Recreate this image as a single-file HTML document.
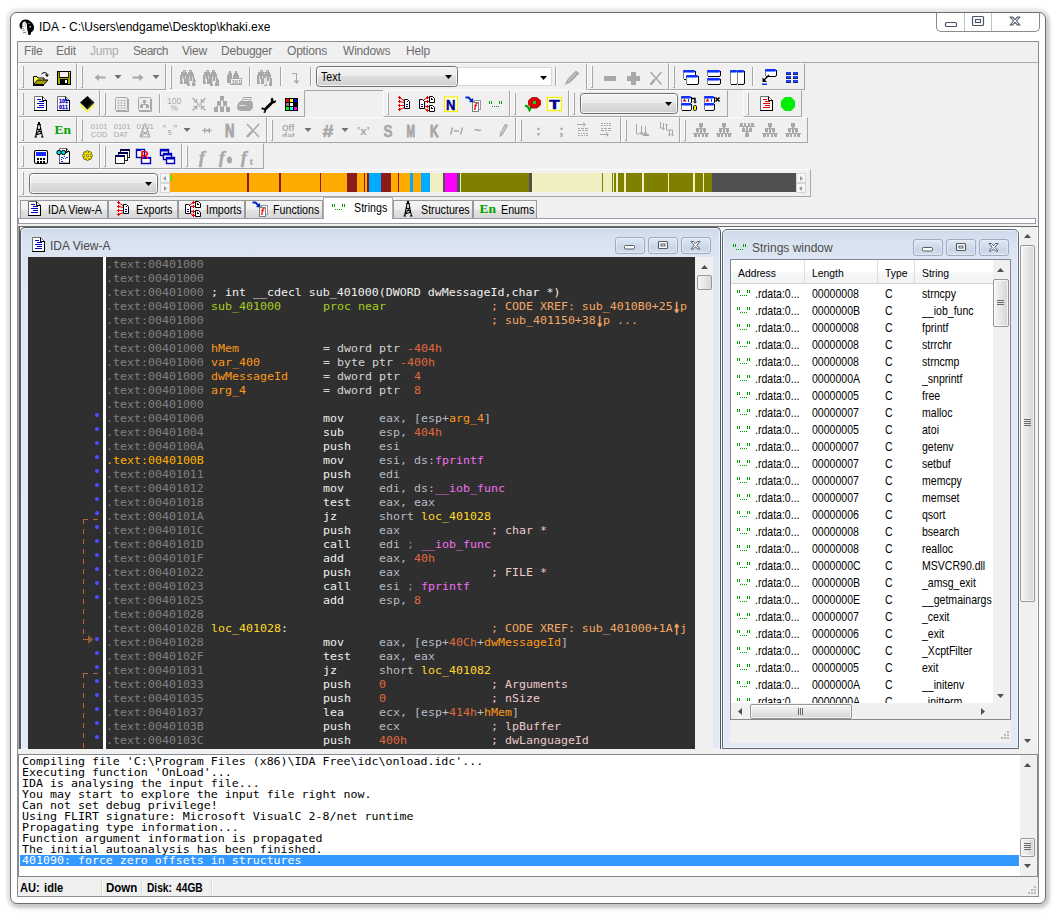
<!DOCTYPE html>
<html><head><meta charset="utf-8"><title>IDA - C:\Users\endgame\Desktop\khaki.exe</title>
<style>
html,body{margin:0;padding:0;background:#fff;}
body{width:1057px;height:915px;position:relative;overflow:hidden;font-family:"Liberation Sans",sans-serif;font-size:12px;color:#000;}
div,svg,span.a{position:absolute;box-sizing:border-box;}
svg{overflow:visible;}
.t{white-space:pre;line-height:14px;}
.m{white-space:pre;font-family:"DejaVu Sans Mono","Liberation Mono",monospace;font-size:11.627px;line-height:14px;transform:scaleY(.93);transform-origin:0 11px;}
.o{white-space:pre;font-family:"DejaVu Sans Mono","Liberation Mono",monospace;font-size:11.627px;line-height:11px;color:#000;transform:scaleY(.83);transform-origin:0 9.500px;}
.s{white-space:pre;font-size:12.400px;line-height:17px;color:#000;transform:scaleX(.85);transform-origin:0 0;}
.b{white-space:pre;font-size:12.500px;line-height:14px;color:#000;transform:scaleX(.855);transform-origin:0 0;}
</style></head>
<body>
<div style="left:10px;top:12px;width:1036px;height:892px;background:#fff;border:1px solid #6e6e6e;border-radius:7px;box-shadow:0 0 0 1px rgba(255,255,255,.6) inset, 0 0 2px 4px rgba(0,0,0,.075), 2px 3px 5px 1px rgba(0,0,0,.16);"></div>
<svg style="left:18px;top:19px;" width="17" height="17" viewBox="0 0 17 17"><path d="M4 1.500Q8 -0.500 12 2Q16.500 5 16 9.500Q15.500 12.500 13 13.500L12.500 16H10.500L9.500 12L3 10Q-0.500 6 4 1.500Z" fill="#000"/><path d="M4.500 4Q5.500 2 7.500 2.500Q9.500 4.500 9 8L9.500 12.500L10 16H4L4.500 12.500Q3.200 9 4.500 4Z" fill="#f2f2f2"/><path d="M6.500 3L8 4.500V8L7 6Z" fill="#b0b0b0"/><path d="M4 7.500h1.500M4.500 9.500h1.500M4.500 11.500h2M5 13.500h3" stroke="#888" stroke-width=".9"/><circle cx="12.200" cy="7.800" r=".8" fill="#fff"/><circle cx="11" cy="4.500" r=".5" fill="#fff"/></svg>
<div class="t" style="left:39px;top:20px;font-size:12px;color:#000;">IDA - C:\Users\endgame\Desktop\khaki.exe</div>
<div style="left:936px;top:13px;width:104px;height:19px;border:1px solid #8b8b8b;border-top:none;border-radius:0 0 5px 5px;background:#fff;"></div>
<div style="left:964px;top:13px;width:1px;height:18px;background:#b9c6c8;"></div>
<div style="left:991px;top:13px;width:1px;height:18px;background:#b9c6c8;"></div>
<svg style="left:945px;top:18px;" width="14" height="10" viewBox="0 0 14 10"><rect x="0.5" y="4.5" width="11" height="4" rx="1" fill="#fff" stroke="#4c5566" stroke-width="1.2"/></svg>
<svg style="left:972px;top:16px;" width="14" height="12" viewBox="0 0 14 12"><rect x="0.5" y="0.5" width="11" height="9" rx="1" fill="#fff" stroke="#4c5566" stroke-width="1.2"/><rect x="3.5" y="3.5" width="5" height="3" fill="#fff" stroke="#4c5566" stroke-width="1.1"/></svg>
<svg style="left:1009px;top:16px;" width="14" height="12" viewBox="0 0 14 12"><path d="M1 1 L3.5 1 L6 3.6 L8.5 1 L11 1 L7.5 5 L11 9 L8.5 9 L6 6.4 L3.5 9 L1 9 L4.5 5 Z" fill="#fff" stroke="#4c5566" stroke-width="1.1" stroke-linejoin="round"/></svg>
<div style="left:17px;top:41px;width:1022px;height:856px;background:#f0f0f0;border:1px solid #8e8e8e;"></div>
<div class="t" style="left:24px;top:44px;font-size:12px;letter-spacing:-0.2px;color:#6e6e6e;">File</div>
<div class="t" style="left:56px;top:44px;font-size:12px;letter-spacing:-0.2px;color:#6e6e6e;">Edit</div>
<div class="t" style="left:90px;top:44px;font-size:12px;letter-spacing:-0.2px;color:#ababab;">Jump</div>
<div class="t" style="left:133px;top:44px;font-size:12px;letter-spacing:-0.5px;color:#6e6e6e;">Search</div>
<div class="t" style="left:182px;top:44px;font-size:12px;letter-spacing:-0.2px;color:#6e6e6e;">View</div>
<div class="t" style="left:221px;top:44px;font-size:12px;letter-spacing:-0.2px;color:#6e6e6e;">Debugger</div>
<div class="t" style="left:287px;top:44px;font-size:12px;letter-spacing:-0.2px;color:#6e6e6e;">Options</div>
<div class="t" style="left:343px;top:44px;font-size:12px;letter-spacing:-0.2px;color:#6e6e6e;">Windows</div>
<div class="t" style="left:406px;top:44px;font-size:12px;letter-spacing:-0.2px;color:#6e6e6e;">Help</div>
<div style="left:18px;top:62px;width:1020px;height:1px;background:#a9a9a9;"></div>
<div style="left:18px;top:63px;width:59px;height:27px;border-right:1px solid #a6a6a6;border-bottom:1px solid #a6a6a6;border-top:1px solid #fbfbfb;border-left:1px solid #fbfbfb;"></div>
<div style="left:22px;top:66px;width:1px;height:21px;background:#fbfbfb;"></div>
<div style="left:23px;top:66px;width:1px;height:21px;background:#a6a6a6;"></div>
<div style="left:22px;top:87px;width:2px;height:1px;background:#a6a6a6;"></div>
<svg style="left:33px;top:70px;" width="16" height="16" viewBox="0 0 16 16"><path d="M8.500 4q2.500-3 5.500-.500v1" fill="none" stroke="#000"/><path d="M12 4.500h4l-2 2.500z" fill="#000"/><path d="M.500 14.500v-8h3.500l1 1.500h6v2" fill="#ffff50" stroke="#000"/><path d="M.500 14.500l4-4.500h10.500l-4 4.500z" fill="#a0a000" stroke="#000"/><g fill="#000" shape-rendering="crispEdges"><rect x="0" y="15" width="11" height="1"/></g></svg>
<svg style="left:56px;top:70px;" width="16" height="16" viewBox="0 0 16 16"><g fill="#000" shape-rendering="crispEdges"><rect x="1" y="1" width="14" height="14"/></g><g fill="#a8a800" shape-rendering="crispEdges"><rect x="2" y="2" width="12" height="12"/></g><g fill="#f4f4f4" shape-rendering="crispEdges"><rect x="4" y="2" width="8" height="5"/></g><g fill="#000" shape-rendering="crispEdges"><rect x="4" y="7" width="8" height="1"/></g><g fill="#000" shape-rendering="crispEdges"><rect x="4" y="9" width="8" height="5"/></g><g fill="#fff" shape-rendering="crispEdges"><rect x="9" y="10" width="2" height="3"/></g><g fill="#fff" shape-rendering="crispEdges"><rect x="13" y="2" width="1" height="1"/></g><g fill="#303000" shape-rendering="crispEdges"><rect x="3" y="2" width="1" height="6"/><rect x="12" y="2" width="1" height="6"/></g></svg>
<div style="left:77px;top:63px;width:89px;height:27px;border-right:1px solid #a6a6a6;border-bottom:1px solid #a6a6a6;border-top:1px solid #fbfbfb;border-left:1px solid #fbfbfb;"></div>
<div style="left:81px;top:66px;width:1px;height:21px;background:#fbfbfb;"></div>
<div style="left:82px;top:66px;width:1px;height:21px;background:#a6a6a6;"></div>
<div style="left:81px;top:87px;width:2px;height:1px;background:#a6a6a6;"></div>
<svg style="left:92px;top:69px;" width="16" height="16" viewBox="0 0 16 16"><path d="M2.500 8.500l4.500-3.500v2.500h6.500v2h-6.500v2.500z" fill="#a8a8a8"/></svg>
<svg style="left:110px;top:69px;" width="16" height="16" viewBox="0 0 16 16"><path d="M4.500 6h7l-3.500 4z" fill="#707070"/></svg>
<svg style="left:130px;top:69px;" width="16" height="16" viewBox="0 0 16 16"><path d="M13.500 8.500l-4.500-3.500v2.500h-6.500v2h6.500v2.500z" fill="#a8a8a8"/></svg>
<svg style="left:148px;top:69px;" width="16" height="16" viewBox="0 0 16 16"><path d="M4.500 6h7l-3.500 4z" fill="#707070"/></svg>
<div style="left:166px;top:63px;width:421px;height:28px;border-right:1px solid #a6a6a6;border-bottom:1px solid #a6a6a6;border-top:1px solid #fbfbfb;border-left:1px solid #fbfbfb;"></div>
<div style="left:170px;top:66px;width:1px;height:22px;background:#fbfbfb;"></div>
<div style="left:171px;top:66px;width:1px;height:22px;background:#a6a6a6;"></div>
<div style="left:170px;top:88px;width:2px;height:1px;background:#a6a6a6;"></div>
<svg style="left:180px;top:70px;" width="16" height="16" viewBox="0 0 16 16"><path d="M3 0h3v2h1v2h1v3h-1v7h-3v-5h-1v5h-3v-9h1v-3h2z" fill="#a8a8a8"/><path d="M9 0h3v2h1v2h1v4h1v8h-3v-5h-2v5h-3v-9h1v-5h1z" fill="#a8a8a8"/><path d="M4.500 1v1M10.500 1v1M2.500 6v6M9.500 6v8M5.500 6v3M12.500 7v6" stroke="#d8d8d8" stroke-width="1"/><g fill="#a8a8a8" shape-rendering="crispEdges"><rect x="14" y="8" width="1" height="1"/><rect x="15" y="10" width="1" height="1"/><rect x="14" y="12" width="1" height="1"/><rect x="15" y="14" width="1" height="1"/></g></svg>
<svg style="left:203px;top:70px;" width="16" height="16" viewBox="0 0 16 16"><path d="M3 0h3v2h1v2h1v3h-1v7h-3v-5h-1v5h-3v-9h1v-3h2z" fill="#a8a8a8"/><path d="M9 0h3v2h1v2h1v4h1v8h-3v-5h-2v5h-3v-9h1v-5h1z" fill="#a8a8a8"/><path d="M4.500 1v1M10.500 1v1M2.500 6v6M9.500 6v8M5.500 6v3M12.500 7v6" stroke="#d8d8d8" stroke-width="1"/><path d="M13 7l3 3v6h-2z" fill="#a8a8a8"/></svg>
<svg style="left:226px;top:70px;" width="16" height="16" viewBox="0 0 16 16"><g fill="#a8a8a8" shape-rendering="crispEdges"><rect x="3" y="1" width="2" height="2"/><rect x="2" y="3" width="4" height="2"/><rect x="1" y="5" width="5" height="8"/><rect x="9" y="1" width="2" height="2"/><rect x="8" y="3" width="4" height="2"/><rect x="7" y="5" width="6" height="3"/></g><rect x="4.500" y="8.500" width="11" height="6" fill="#f4f4f4" stroke="#a8a8a8" shape-rendering="crispEdges"/><text x="5.8" y="13.6" font-size="5.5" fill="#909090" font-weight="bold" font-family="Liberation Sans,sans-serif" >101</text></svg>
<div style="left:249px;top:67px;width:1px;height:19px;background:#a6a6a6;"></div>
<div style="left:250px;top:67px;width:1px;height:19px;background:#fbfbfb;"></div>
<svg style="left:257px;top:70px;" width="16" height="16" viewBox="0 0 16 16"><path d="M3 0h3v2h1v2h1v3h-1v7h-3v-5h-1v5h-3v-9h1v-3h2z" fill="#a8a8a8"/><path d="M9 0h3v2h1v2h1v4h1v8h-3v-5h-2v5h-3v-9h1v-5h1z" fill="#a8a8a8"/><path d="M4.500 1v1M10.500 1v1M2.500 6v6M9.500 6v8M5.500 6v3M12.500 7v6" stroke="#d8d8d8" stroke-width="1"/><g fill="#a8a8a8" shape-rendering="crispEdges"><rect x="6" y="2" width="3" height="1"/></g><g fill="#e8e8e8" shape-rendering="crispEdges"><rect x="7" y="8" width="2" height="7"/></g></svg>
<div style="left:280px;top:67px;width:1px;height:19px;background:#a6a6a6;"></div>
<div style="left:281px;top:67px;width:1px;height:19px;background:#fbfbfb;"></div>
<svg style="left:288px;top:70px;" width="16" height="16" viewBox="0 0 16 16"><g fill="#a8a8a8" shape-rendering="crispEdges"><rect x="4" y="3" width="5" height="1"/><rect x="8" y="4" width="1" height="8"/></g><path d="M5.500 10.500h6l-3 3.500z" fill="#a8a8a8"/></svg>
<div style="left:310px;top:67px;width:1px;height:19px;background:#a6a6a6;"></div>
<div style="left:311px;top:67px;width:1px;height:19px;background:#fbfbfb;"></div>
<div style="left:316px;top:66px;width:142px;height:21px;border:1px solid #707070;border-radius:3.500px;background:linear-gradient(#f3f3f3 0%,#ececec 47%,#dedede 50%,#d0d0d0 100%);box-shadow:inset 0 0 0 1px rgba(255,255,255,.75);"></div>
<svg style="left:445px;top:75px;" width="8" height="4" viewBox="0 0 8 4"><path d="M0 0h7l-3.500 4z" fill="#000"/></svg>
<div class="b" style="left:321px;top:70px;">Text</div>
<div style="left:458px;top:67px;width:94px;height:19px;background:#fff;border:1px solid #d4d8e0;border-left:none;"></div>
<svg style="left:540px;top:76px;" width="8" height="4" viewBox="0 0 8 4"><path d="M0 0h7l-3.500 4z" fill="#000"/></svg>
<div style="left:555px;top:67px;width:1px;height:19px;background:#a6a6a6;"></div>
<div style="left:556px;top:67px;width:1px;height:19px;background:#fbfbfb;"></div>
<svg style="left:564px;top:70px;" width="16" height="16" viewBox="0 0 16 16"><path d="M.500 15l3-6 8.500-8.500 3.500 3-9 9z" fill="#a8a8a8"/><path d="M5 10l7-7M7 12l7-7M3.500 9.500l3.500 3" stroke="#dcdcdc" stroke-width=".8"/></svg>
<div style="left:587px;top:63px;width:82px;height:27px;border-right:1px solid #a6a6a6;border-bottom:1px solid #a6a6a6;border-top:1px solid #fbfbfb;border-left:1px solid #fbfbfb;"></div>
<div style="left:591px;top:66px;width:1px;height:21px;background:#fbfbfb;"></div>
<div style="left:592px;top:66px;width:1px;height:21px;background:#a6a6a6;"></div>
<div style="left:591px;top:87px;width:2px;height:1px;background:#a6a6a6;"></div>
<svg style="left:602px;top:70px;" width="16" height="16" viewBox="0 0 16 16"><g fill="#a8a8a8" shape-rendering="crispEdges"><rect x="2" y="6" width="12" height="5"/></g></svg>
<svg style="left:625px;top:70px;" width="16" height="16" viewBox="0 0 16 16"><g fill="#a8a8a8" shape-rendering="crispEdges"><rect x="6" y="2" width="5" height="13"/><rect x="2" y="6" width="13" height="5"/></g></svg>
<svg style="left:648px;top:70px;" width="16" height="16" viewBox="0 0 16 16"><path d="M2.500 2l11 12.500M13.500 2l-11 12.500" stroke="#a8a8a8" stroke-width="1.500"/><path d="M2.500 14.500l4-4.500" stroke="#a8a8a8" stroke-width="2.500"/></svg>
<div style="left:669px;top:63px;width:136px;height:27px;border-right:1px solid #a6a6a6;border-bottom:1px solid #a6a6a6;border-top:1px solid #fbfbfb;border-left:1px solid #fbfbfb;"></div>
<div style="left:673px;top:66px;width:1px;height:21px;background:#fbfbfb;"></div>
<div style="left:674px;top:66px;width:1px;height:21px;background:#a6a6a6;"></div>
<div style="left:673px;top:87px;width:2px;height:1px;background:#a6a6a6;"></div>
<svg style="left:683px;top:70px;" width="16" height="16" viewBox="0 0 16 16"><rect x="0" y="0" width="12" height="10" rx="1.500" fill="#fff"/><path d="M0.5 9v-7" stroke="#808080" fill="none"/><path d="M1 9.5h10q1.500 0 1.500-1.500v-7" stroke="#000" fill="none"/><rect x="0" y="0" width="12" height="2.500" rx="1" fill="#1030ff"/><rect x="1" y="2" width="10" height="1" fill="#7090ff"/><rect x="3" y="5" width="12" height="10" rx="1.500" fill="#fff"/><path d="M3.5 14v-7" stroke="#808080" fill="none"/><path d="M4 14.5h10q1.500 0 1.500-1.500v-7" stroke="#000" fill="none"/><rect x="3" y="5" width="12" height="2.500" rx="1" fill="#1030ff"/><rect x="4" y="7" width="10" height="1" fill="#7090ff"/></svg>
<svg style="left:706px;top:70px;" width="16" height="16" viewBox="0 0 16 16"><rect x="1" y="0" width="13" height="7" rx="1.500" fill="#fff"/><path d="M1.5 6v-4" stroke="#808080" fill="none"/><path d="M2 6.5h11q1.500 0 1.500-1.500v-4" stroke="#000" fill="none"/><rect x="1" y="0" width="13" height="2.500" rx="1" fill="#1030ff"/><rect x="2" y="2" width="11" height="1" fill="#7090ff"/><rect x="1" y="8" width="13" height="7" rx="1.500" fill="#fff"/><path d="M1.5 14v-4" stroke="#808080" fill="none"/><path d="M2 14.5h11q1.500 0 1.500-1.500v-4" stroke="#000" fill="none"/><rect x="1" y="8" width="13" height="2.500" rx="1" fill="#1030ff"/><rect x="2" y="10" width="11" height="1" fill="#7090ff"/></svg>
<svg style="left:729px;top:70px;" width="16" height="16" viewBox="0 0 16 16"><rect x="1" y="0" width="7" height="15" rx="1.500" fill="#fff"/><path d="M1.5 14v-12" stroke="#808080" fill="none"/><path d="M2 14.5h5q1.500 0 1.500-1.500v-12" stroke="#000" fill="none"/><rect x="1" y="0" width="7" height="2.500" rx="1" fill="#1030ff"/><rect x="2" y="2" width="5" height="1" fill="#7090ff"/><rect x="8" y="0" width="7" height="15" rx="1.500" fill="#fff"/><path d="M8.5 14v-12" stroke="#808080" fill="none"/><path d="M9 14.5h5q1.500 0 1.500-1.500v-12" stroke="#000" fill="none"/><rect x="8" y="0" width="7" height="2.500" rx="1" fill="#1030ff"/><rect x="9" y="2" width="5" height="1" fill="#7090ff"/></svg>
<div style="left:752px;top:67px;width:1px;height:19px;background:#a6a6a6;"></div>
<div style="left:753px;top:67px;width:1px;height:19px;background:#fbfbfb;"></div>
<svg style="left:760px;top:70px;" width="16" height="16" viewBox="0 0 16 16"><rect x="5" y="-1" width="11" height="8" rx="1.500" fill="#fff"/><path d="M5.5 6v-5" stroke="#808080" fill="none"/><path d="M6 6.5h9q1.500 0 1.500-1.500v-5" stroke="#000" fill="none"/><rect x="5" y="-1" width="11" height="2.500" rx="1" fill="#1030ff"/><rect x="6" y="1" width="9" height="1" fill="#7090ff"/><path d="M9 5l-5 5" stroke="#000" stroke-width="1.300"/><path d="M2.500 12v-4.500l4.500 4.500z" fill="#000"/><g fill="#1030ff" shape-rendering="crispEdges"><rect x="2" y="13" width="5" height="2"/></g><g fill="#7090ff" shape-rendering="crispEdges"><rect x="2" y="13" width="5" height="1"/></g></svg>
<svg style="left:784px;top:70px;" width="16" height="16" viewBox="0 0 16 16"><g fill="#2040e8" shape-rendering="crispEdges"><rect x="2" y="2" width="5" height="2"/><rect x="9" y="2" width="5" height="2"/><rect x="2" y="6" width="5" height="2"/><rect x="9" y="6" width="5" height="2"/><rect x="2" y="10" width="5" height="2"/><rect x="9" y="10" width="5" height="2"/></g><g fill="#182060" shape-rendering="crispEdges"><rect x="2" y="4" width="5" height="1"/><rect x="9" y="4" width="5" height="1"/><rect x="2" y="8" width="5" height="1"/><rect x="9" y="8" width="5" height="1"/><rect x="2" y="12" width="5" height="1"/><rect x="9" y="12" width="5" height="1"/></g></svg>
<div style="left:18px;top:90px;width:82px;height:27px;border-right:1px solid #a6a6a6;border-bottom:1px solid #a6a6a6;border-top:1px solid #fbfbfb;border-left:1px solid #fbfbfb;"></div>
<div style="left:22px;top:93px;width:1px;height:21px;background:#fbfbfb;"></div>
<div style="left:23px;top:93px;width:1px;height:21px;background:#a6a6a6;"></div>
<div style="left:22px;top:114px;width:2px;height:1px;background:#a6a6a6;"></div>
<svg style="left:33px;top:96px;" width="16" height="16" viewBox="0 0 16 16"><path d="M1.500 .500h8l4 4v10h-12z" fill="#fff" stroke="#707070"/><path d="M9.500 .500v4h4" fill="none" stroke="#000"/><g fill="#000" shape-rendering="crispEdges"><rect x="1" y="14" width="13" height="1"/><rect x="13" y="4" width="1" height="11"/></g><g fill="#0000c8" shape-rendering="crispEdges"><rect x="4" y="3" width="4" height="1"/><rect x="6" y="5" width="5" height="1"/><rect x="4" y="7" width="7" height="1"/><rect x="6" y="9" width="5" height="1"/><rect x="4" y="11" width="7" height="1"/></g></svg>
<svg style="left:56px;top:96px;" width="16" height="16" viewBox="0 0 16 16"><path d="M1.500 .500h8l4 4v10h-12z" fill="#fff" stroke="#707070"/><path d="M9.500 .500v4h4" fill="none" stroke="#000"/><g fill="#000" shape-rendering="crispEdges"><rect x="1" y="14" width="13" height="1"/><rect x="13" y="4" width="1" height="11"/></g><text x="2.9" y="7.2" font-size="5.6" fill="#0000c8" font-weight="bold" font-family="DejaVu Sans,sans-serif" textLength="9" lengthAdjust="spacingAndGlyphs" stroke="#0000c8" stroke-width=".25">101</text><text x="2.9" y="12.6" font-size="5.6" fill="#0000c8" font-weight="bold" font-family="DejaVu Sans,sans-serif" textLength="9" lengthAdjust="spacingAndGlyphs" stroke="#0000c8" stroke-width=".25">011</text></svg>
<svg style="left:79px;top:96px;" width="16" height="16" viewBox="0 0 16 16"><path d="M2.500 8v3M4.500 10v3M6.500 12v3M8.500 13.500v2.500M10.500 12v3M12.500 10v3M14.500 8v3" stroke="#f8f000" stroke-width="1.200"/><path d="M8.500 0l7 6.500-7 7-7.500-7z" fill="#000"/><path d="M9.500 2l4.500 4.500-5.500 5.500" fill="none" stroke="#805838" stroke-width=".8"/></svg>
<div style="left:100px;top:90px;width:205px;height:27px;border-right:1px solid #a6a6a6;border-bottom:1px solid #a6a6a6;border-top:1px solid #fbfbfb;border-left:1px solid #fbfbfb;"></div>
<div style="left:104px;top:93px;width:1px;height:21px;background:#fbfbfb;"></div>
<div style="left:105px;top:93px;width:1px;height:21px;background:#a6a6a6;"></div>
<div style="left:104px;top:114px;width:2px;height:1px;background:#a6a6a6;"></div>
<svg style="left:114px;top:96px;" width="16" height="16" viewBox="0 0 16 16"><rect x="1.500" y="1.500" width="12" height="13" rx="1" fill="#ececec" stroke="#a8a8a8"/><g fill="#a8a8a8" shape-rendering="crispEdges"><rect x="2" y="15" width="13" height="1"/><rect x="14" y="3" width="1" height="12"/></g><path d="M3.500 4.500h8M3.500 7h8M3.500 9.500h8M3.500 12h8" stroke="#a8a8a8" stroke-dasharray="2 1"/></svg>
<svg style="left:137px;top:96px;" width="16" height="16" viewBox="0 0 16 16"><rect x="1.500" y="1.500" width="12" height="13" rx="1" fill="#ececec" stroke="#a8a8a8"/><g fill="#a8a8a8" shape-rendering="crispEdges"><rect x="2" y="15" width="13" height="1"/><rect x="14" y="3" width="1" height="12"/></g><g fill="#a8a8a8" shape-rendering="crispEdges"><rect x="6" y="4" width="3" height="3"/><rect x="7" y="7" width="1" height="2"/><rect x="4" y="8" width="7" height="1"/><rect x="3" y="9" width="3" height="3"/><rect x="9" y="9" width="3" height="3"/></g></svg>
<div style="left:159px;top:94px;width:1px;height:19px;background:#a6a6a6;"></div>
<div style="left:160px;top:94px;width:1px;height:19px;background:#fbfbfb;"></div>
<svg style="left:167px;top:96px;" width="16" height="16" viewBox="0 0 16 16"><text x="0" y="7.5" font-size="8.5" fill="#a8a8a8" font-weight="normal" font-family="Liberation Sans,sans-serif" >100</text><text x="3.5" y="15" font-size="8.5" fill="#a8a8a8" font-weight="normal" font-family="Liberation Sans,sans-serif" >%</text></svg>
<svg style="left:191px;top:96px;" width="16" height="16" viewBox="0 0 16 16"><path d="M1.500 2l4 4M14.500 2l-4 4M1.500 14.500l4-4M14.500 14.500l-4-4" stroke="#a8a8a8" stroke-width="1.200"/><path d="M5.500 3v3h-3M10.500 3v3h3M5.500 13.500v-3h-3M10.500 13.500v-3h3" fill="none" stroke="#a8a8a8" stroke-width="1.200"/><text x="5.3" y="11" font-size="7" fill="#a8a8a8" font-weight="normal" font-family="Liberation Sans,sans-serif" >M</text></svg>
<svg style="left:214px;top:96px;" width="16" height="16" viewBox="0 0 16 16"><g fill="#a8a8a8" shape-rendering="crispEdges"><rect x="6" y="0" width="4" height="4"/><rect x="3" y="5" width="4" height="4"/><rect x="9" y="5" width="4" height="4"/><rect x="0" y="11" width="4" height="5"/><rect x="6" y="11" width="4" height="5"/><rect x="12" y="11" width="4" height="5"/></g><path d="M8 3l-6 9M8 3l6 9M5 9l3 3M11 9l-3 3" stroke="#a8a8a8" stroke-width="1.200"/></svg>
<svg style="left:237px;top:96px;" width="16" height="16" viewBox="0 0 16 16"><path d="M4.500 5.500l2-4h8l-2 4z" fill="#ececec" stroke="#a8a8a8"/><path d="M.500 8l3-3h11.500l1 3v4l-3 3h-10l-3-2z" fill="#a8a8a8"/><path d="M7 3.500h5" stroke="#a8a8a8"/><path d="M2 9.500h7" stroke="#e8e8e8"/></svg>
<svg style="left:260px;top:96px;" width="16" height="16" viewBox="0 0 16 16"><path d="M1 13l1.500-2 1.500 1.500 7-7q-1-2.500 1-4l1.500 1.500-.5 1.500 2 .5 1-1q.5 3-3 3.500l-7 7q.5 2-1.500 2.500l-1.500-1 1.500-.5-.5-1.500z" fill="#000"/></svg>
<svg style="left:283px;top:96px;" width="16" height="16" viewBox="0 0 16 16"><g fill="#000" shape-rendering="crispEdges"><rect x="2" y="2" width="13" height="13"/></g><g fill="#f00" shape-rendering="crispEdges"><rect x="3" y="3" width="3" height="3"/></g><g fill="#ff0" shape-rendering="crispEdges"><rect x="7" y="3" width="3" height="3"/></g><g fill="#00f" shape-rendering="crispEdges"><rect x="11" y="3" width="3" height="3"/></g><g fill="#808080" shape-rendering="crispEdges"><rect x="3" y="7" width="3" height="3"/></g><g fill="#fff" shape-rendering="crispEdges"><rect x="7" y="7" width="3" height="3"/></g><g fill="#0f0" shape-rendering="crispEdges"><rect x="3" y="11" width="3" height="3"/></g><g fill="#0ff" shape-rendering="crispEdges"><rect x="7" y="11" width="3" height="3"/></g><g fill="#f0f" shape-rendering="crispEdges"><rect x="11" y="11" width="3" height="3"/></g></svg>
<div style="left:383px;top:90px;width:127px;height:27px;border-right:1px solid #a6a6a6;border-bottom:1px solid #a6a6a6;border-top:1px solid #fbfbfb;border-left:1px solid #fbfbfb;"></div>
<div style="left:387px;top:93px;width:1px;height:21px;background:#fbfbfb;"></div>
<div style="left:388px;top:93px;width:1px;height:21px;background:#a6a6a6;"></div>
<div style="left:387px;top:114px;width:2px;height:1px;background:#a6a6a6;"></div>
<svg style="left:396px;top:96px;" width="16" height="16" viewBox="0 0 16 16"><path d="M3.500 1.500l5 3.500M3.500 5.500l5 1M3.500 9.500h5M3.500 13.500l5-2" stroke="#f00000" stroke-width="1"/><g fill="#f00000" shape-rendering="crispEdges"><rect x="2" y="1" width="3" height="1"/><rect x="3" y="0" width="1" height="3"/><rect x="2" y="5" width="3" height="1"/><rect x="3" y="4" width="1" height="3"/><rect x="2" y="9" width="3" height="1"/><rect x="3" y="8" width="1" height="3"/><rect x="2" y="13" width="3" height="1"/><rect x="3" y="12" width="1" height="3"/></g><path d="M8.500 3.500h3l2 2v7h-5z" fill="#fff" stroke="#000"/><g fill="#0000a8" shape-rendering="crispEdges"><rect x="10" y="8" width="2" height="1"/><rect x="10" y="10" width="2" height="1"/></g><g fill="#000" shape-rendering="crispEdges"><rect x="11" y="5" width="1" height="1"/></g></svg>
<svg style="left:419px;top:96px;" width="16" height="16" viewBox="0 0 16 16"><path d="M8.500 1.500l-4 2.500M8.500 5.500h-3M8.500 10.500h-3M8.500 14.500l-3-2" stroke="#f00000" stroke-width="1"/><g fill="#f00000" shape-rendering="crispEdges"><rect x="7" y="1" width="3" height="1"/><rect x="8" y="0" width="1" height="3"/><rect x="7" y="5" width="3" height="1"/><rect x="8" y="4" width="1" height="3"/><rect x="7" y="10" width="3" height="1"/><rect x="8" y="9" width="1" height="3"/><rect x="7" y="14" width="3" height="1"/><rect x="8" y="13" width="1" height="3"/></g><path d="M.500 3.500h3l2 2v7h-5z" fill="#fff" stroke="#000"/><g fill="#0000a8" shape-rendering="crispEdges"><rect x="2" y="8" width="2" height="1"/><rect x="2" y="10" width="2" height="1"/></g><path d="M10.500 .500h3l2 2v4h-5zM10.500 9.500h3l2 2v4h-5z" fill="#fff" stroke="#000"/><g fill="#000" shape-rendering="crispEdges"><rect x="12" y="2" width="1" height="2"/><rect x="12" y="3" width="2" height="1"/><rect x="12" y="11" width="1" height="2"/><rect x="12" y="12" width="2" height="1"/></g></svg>
<svg style="left:442px;top:96px;" width="16" height="16" viewBox="0 0 16 16"><rect x="2.500" y="1" width="13" height="14.500" fill="#fff" stroke="#f8f000" stroke-width="1.200"/><text x="4" y="14" font-size="15.5" fill="#00008c" font-weight="bold" font-family="Liberation Sans,sans-serif" textLength="9.5" lengthAdjust="spacingAndGlyphs" stroke="#00008c" stroke-width=".5">N</text></svg>
<svg style="left:465px;top:96px;" width="16" height="16" viewBox="0 0 16 16"><path d="M.500 1.500h3l3 3" fill="none" stroke="#0028c0" stroke-width="2"/><path d="M8.500 6.500l-4.500-.500 4-4z" fill="#0028c0"/><rect x="9.500" y="4.500" width="6" height="9" fill="#fff" stroke="#9a9a9a"/><rect x="7.500" y="6.500" width="6" height="9" fill="#fff" stroke="#808080"/><text x="8.8" y="14.2" font-size="9.5" fill="#f00000" font-weight="bold" font-family="Liberation Sans,sans-serif" font-style="italic">f</text></svg>
<svg style="left:488px;top:96px;" width="16" height="16" viewBox="0 0 16 16"><g fill="#00a000" shape-rendering="crispEdges"><rect x="1" y="5" width="1" height="3"/><rect x="3" y="5" width="1" height="3"/><rect x="11" y="5" width="1" height="3"/><rect x="13" y="5" width="1" height="3"/><rect x="4" y="10" width="1" height="1"/><rect x="6" y="10" width="1" height="1"/><rect x="8" y="10" width="1" height="1"/><rect x="10" y="10" width="1" height="1"/></g></svg>
<div style="left:510px;top:90px;width:59px;height:27px;border-right:1px solid #a6a6a6;border-bottom:1px solid #a6a6a6;border-top:1px solid #fbfbfb;border-left:1px solid #fbfbfb;"></div>
<div style="left:514px;top:93px;width:1px;height:21px;background:#fbfbfb;"></div>
<div style="left:515px;top:93px;width:1px;height:21px;background:#a6a6a6;"></div>
<div style="left:514px;top:114px;width:2px;height:1px;background:#a6a6a6;"></div>
<svg style="left:525px;top:96px;" width="16" height="16" viewBox="0 0 16 16"><path d="M0 10q3-.500 4.500 4l2.500-4" fill="none" stroke="#00a800" stroke-width="2.200"/><path d="M7 1.500h5l3.500 3v4.500l-3.500 3h-5l-3.500-3v-4.500z" fill="#e80000" stroke="#900000" stroke-width=".7"/><path d="M9.500 1.500v11M3.500 7h12M5 3.500l9 7M14 3.500l-9 7" stroke="#a80000" stroke-width=".5"/><rect x="8" y="5" width="3" height="3" fill="#00e020"/></svg>
<svg style="left:546px;top:96px;" width="16" height="16" viewBox="0 0 16 16"><rect x="1.500" y="1.500" width="14" height="13" fill="#fff" stroke="#f8f000" stroke-width="1.300"/><text x="3.2" y="12.6" font-size="13" fill="#00008c" font-weight="bold" font-family="Liberation Sans,sans-serif" textLength="10.5" lengthAdjust="spacingAndGlyphs" stroke="#00008c" stroke-width=".6">T</text></svg>
<div style="left:569px;top:90px;width:159px;height:27px;border-right:1px solid #a6a6a6;border-bottom:1px solid #a6a6a6;border-top:1px solid #fbfbfb;border-left:1px solid #fbfbfb;"></div>
<div style="left:573px;top:93px;width:1px;height:21px;background:#fbfbfb;"></div>
<div style="left:574px;top:93px;width:1px;height:21px;background:#a6a6a6;"></div>
<div style="left:573px;top:114px;width:2px;height:1px;background:#a6a6a6;"></div>
<div style="left:580px;top:93px;width:98px;height:21px;border:1px solid #707070;border-radius:3.500px;background:linear-gradient(#f3f3f3 0%,#ececec 47%,#dedede 50%,#d0d0d0 100%);box-shadow:inset 0 0 0 1px rgba(255,255,255,.75);"></div>
<svg style="left:665px;top:102px;" width="8" height="4" viewBox="0 0 8 4"><path d="M0 0h7l-3.500 4z" fill="#000"/></svg>
<svg style="left:681px;top:96px;" width="16" height="16" viewBox="0 0 16 16"><rect x="0" y="0" width="10" height="8" rx="1.500" fill="#fff"/><path d="M0.5 7v-5" stroke="#808080" fill="none"/><path d="M1 7.5h8q1.500 0 1.500-1.500v-5" stroke="#000" fill="none"/><rect x="0" y="0" width="10" height="2.500" rx="1" fill="#1030ff"/><rect x="1" y="2" width="8" height="1" fill="#7090ff"/><rect x="0" y="7" width="10" height="8" rx="1.500" fill="#fff"/><path d="M0.5 14v-5" stroke="#808080" fill="none"/><path d="M1 14.5h8q1.500 0 1.500-1.500v-5" stroke="#000" fill="none"/><rect x="0" y="7" width="10" height="2.500" rx="1" fill="#1030ff"/><rect x="1" y="9" width="8" height="1" fill="#7090ff"/><path d="M3.500 2.500l2 3h-4z" fill="#e00000"/><g fill="#1030ff" shape-rendering="crispEdges"><rect x="7" y="3" width="1" height="3"/></g><path d="M11 2.500h3v3" fill="none" stroke="#000" stroke-width="1.500"/><path d="M12 5.500h4l-2 2z" fill="#000"/><rect x="12.500" y="9.500" width="3" height="5" rx="1.200" fill="#f8f000" stroke="#000"/></svg>
<svg style="left:704px;top:96px;" width="16" height="16" viewBox="0 0 16 16"><rect x="0" y="0" width="10" height="8" rx="1.500" fill="#fff"/><path d="M0.5 7v-5" stroke="#808080" fill="none"/><path d="M1 7.5h8q1.500 0 1.500-1.500v-5" stroke="#000" fill="none"/><rect x="0" y="0" width="10" height="2.500" rx="1" fill="#1030ff"/><rect x="1" y="2" width="8" height="1" fill="#7090ff"/><rect x="0" y="7" width="10" height="8" rx="1.500" fill="#fff"/><path d="M0.5 14v-5" stroke="#808080" fill="none"/><path d="M1 14.5h8q1.500 0 1.500-1.500v-5" stroke="#000" fill="none"/><rect x="0" y="7" width="10" height="2.500" rx="1" fill="#1030ff"/><rect x="1" y="9" width="8" height="1" fill="#7090ff"/><path d="M3.500 2.500l2 3h-4z" fill="#e00000"/><g fill="#1030ff" shape-rendering="crispEdges"><rect x="7" y="3" width="1" height="3"/></g><path d="M11.500 1.500l4 4M15.500 1.500l-4 4" stroke="#000" stroke-width="1.600"/></svg>
<div style="left:743px;top:90px;width:59px;height:27px;border-right:1px solid #a6a6a6;border-bottom:1px solid #a6a6a6;border-top:1px solid #fbfbfb;border-left:1px solid #fbfbfb;"></div>
<div style="left:747px;top:93px;width:1px;height:21px;background:#fbfbfb;"></div>
<div style="left:748px;top:93px;width:1px;height:21px;background:#a6a6a6;"></div>
<div style="left:747px;top:114px;width:2px;height:1px;background:#a6a6a6;"></div>
<svg style="left:759px;top:96px;" width="16" height="16" viewBox="0 0 16 16"><path d="M1.500 .500h8l4 4v10h-12z" fill="#fff" stroke="#707070"/><path d="M9.500 .500v4h4" fill="none" stroke="#000"/><g fill="#000" shape-rendering="crispEdges"><rect x="1" y="14" width="13" height="1"/><rect x="13" y="4" width="1" height="11"/></g><g fill="#f00000" shape-rendering="crispEdges"><rect x="4" y="3" width="4" height="1"/><rect x="6" y="5" width="5" height="1"/><rect x="4" y="7" width="7" height="1"/><rect x="6" y="9" width="5" height="1"/><rect x="4" y="11" width="7" height="1"/></g></svg>
<svg style="left:780px;top:96px;" width="16" height="16" viewBox="0 0 16 16"><path d="M5 1h6l4 4v6l-4 4h-6l-4-4v-6z" fill="#00ee00"/></svg>
<div style="left:18px;top:117px;width:59px;height:26px;border-right:1px solid #a6a6a6;border-bottom:1px solid #a6a6a6;border-top:1px solid #fbfbfb;border-left:1px solid #fbfbfb;"></div>
<div style="left:22px;top:120px;width:1px;height:20px;background:#fbfbfb;"></div>
<div style="left:23px;top:120px;width:1px;height:20px;background:#a6a6a6;"></div>
<div style="left:22px;top:140px;width:2px;height:1px;background:#a6a6a6;"></div>
<svg style="left:31px;top:122px;" width="16" height="16" viewBox="0 0 16 16"><g fill="#000" shape-rendering="crispEdges"><rect x="7" y="0" width="2" height="2"/><rect x="6" y="2" width="4" height="1"/></g><path d="M7 3l-2.500 12M9 3l2.500 12M3.500 15h2.500M10 15h2.500M6.500 6.500l4.500 5M9.500 6.500l-4.500 6.500M5 13l6-2" fill="none" stroke="#000" stroke-width="1.100"/></svg>
<svg style="left:55px;top:122px;" width="16" height="16" viewBox="0 0 16 16"><text x="-0.5" y="11.5" font-size="13.5" fill="#00a000" font-weight="bold" font-family="Liberation Serif,sans-serif" >En</text></svg>
<div style="left:77px;top:117px;width:190px;height:26px;border-right:1px solid #a6a6a6;border-bottom:1px solid #a6a6a6;border-top:1px solid #fbfbfb;border-left:1px solid #fbfbfb;"></div>
<div style="left:81px;top:120px;width:1px;height:20px;background:#fbfbfb;"></div>
<div style="left:82px;top:120px;width:1px;height:20px;background:#a6a6a6;"></div>
<div style="left:81px;top:140px;width:2px;height:1px;background:#a6a6a6;"></div>
<svg style="left:91px;top:122px;" width="16" height="16" viewBox="0 0 16 16"><text x="-0.2" y="7" font-size="7.4" fill="#a8a8a8" font-weight="normal" font-family="Liberation Sans,sans-serif" >0101</text><text x="-0.2" y="14.5" font-size="7.4" fill="#a8a8a8" font-weight="normal" font-family="Liberation Sans,sans-serif" >COD</text></svg>
<svg style="left:114px;top:122px;" width="16" height="16" viewBox="0 0 16 16"><text x="-0.2" y="7" font-size="7.4" fill="#a8a8a8" font-weight="normal" font-family="Liberation Sans,sans-serif" >0101</text><text x="-0.2" y="14.5" font-size="7.4" fill="#a8a8a8" font-weight="normal" font-family="Liberation Sans,sans-serif" >DAT</text></svg>
<svg style="left:137px;top:122px;" width="16" height="16" viewBox="0 0 16 16"><text x="-0.5" y="7" font-size="7.8" fill="#a8a8a8" font-weight="normal" font-family="Liberation Sans,sans-serif" >0101</text><path d="M8 1v3M7 4l-4 11M9 4l4 11M5 9l6 4M11 9l-7 5M3 15h10" fill="none" stroke="#a8a8a8" stroke-width="1.200"/></svg>
<svg style="left:162px;top:122px;" width="16" height="16" viewBox="0 0 16 16"><text x="0.5" y="10.5" font-size="10" fill="#a8a8a8" font-weight="normal" font-family="Liberation Sans,sans-serif" >"</text><text x="5.5" y="12.5" font-size="8.5" fill="#a8a8a8" font-weight="normal" font-family="Liberation Sans,sans-serif" >s</text><text x="11.5" y="10.5" font-size="10" fill="#a8a8a8" font-weight="normal" font-family="Liberation Sans,sans-serif" >"</text></svg>
<svg style="left:179px;top:122px;" width="16" height="16" viewBox="0 0 16 16"><path d="M4.500 6h7l-3.500 4z" fill="#707070"/></svg>
<svg style="left:199px;top:122px;" width="16" height="16" viewBox="0 0 16 16"><path d="M3 8.500h10M5 6l6 5M11 6l-6 5M5.500 6v5M10.500 6v5" stroke="#a8a8a8" stroke-width="1"/></svg>
<svg style="left:222px;top:122px;" width="16" height="16" viewBox="0 0 16 16"><text x="3" y="14.5" font-size="18" fill="#a8a8a8" font-weight="bold" font-family="Liberation Sans,sans-serif" textLength="9.5" lengthAdjust="spacingAndGlyphs" stroke="#a8a8a8" stroke-width="1" stroke-linejoin="round">N</text></svg>
<svg style="left:245px;top:122px;" width="16" height="16" viewBox="0 0 16 16"><path d="M2 2l12 13M14 2l-12 13" stroke="#a8a8a8" stroke-width="1.500"/><path d="M2 15l5-5.500" stroke="#a8a8a8" stroke-width="2.600"/></svg>
<div style="left:267px;top:117px;width:249px;height:26px;border-right:1px solid #a6a6a6;border-bottom:1px solid #a6a6a6;border-top:1px solid #fbfbfb;border-left:1px solid #fbfbfb;"></div>
<div style="left:271px;top:120px;width:1px;height:20px;background:#fbfbfb;"></div>
<div style="left:272px;top:120px;width:1px;height:20px;background:#a6a6a6;"></div>
<div style="left:271px;top:140px;width:2px;height:1px;background:#a6a6a6;"></div>
<svg style="left:282px;top:122px;" width="16" height="16" viewBox="0 0 16 16"><text x="0" y="9" font-size="8.5" fill="#a8a8a8" font-weight="bold" font-family="Liberation Sans,sans-serif" >Off</text><g clip-path="inset(0 0 3.500px 0)"><text x="0" y="16.5" font-size="8.5" fill="#a8a8a8" font-weight="bold" font-family="Liberation Sans,sans-serif" >dat</text></g></svg>
<svg style="left:300px;top:122px;" width="16" height="16" viewBox="0 0 16 16"><path d="M4.500 6h7l-3.500 4z" fill="#707070"/></svg>
<svg style="left:320px;top:122px;" width="16" height="16" viewBox="0 0 16 16"><text x="2.5" y="14.5" font-size="17" fill="#a8a8a8" font-weight="bold" font-family="Liberation Sans,sans-serif" textLength="11" lengthAdjust="spacingAndGlyphs" stroke="#a8a8a8" stroke-width=".5">#</text></svg>
<svg style="left:337px;top:122px;" width="16" height="16" viewBox="0 0 16 16"><path d="M4.500 6h7l-3.500 4z" fill="#707070"/></svg>
<svg style="left:356px;top:122px;" width="16" height="16" viewBox="0 0 16 16"><text x="1" y="13" font-size="11.5" fill="#a8a8a8" font-weight="bold" font-family="Liberation Sans,sans-serif" >’x’</text></svg>
<svg style="left:380px;top:122px;" width="16" height="16" viewBox="0 0 16 16"><text x="3.5" y="14.5" font-size="17" fill="#a8a8a8" font-weight="bold" font-family="Liberation Sans,sans-serif" textLength="9" lengthAdjust="spacingAndGlyphs" stroke="#a8a8a8" stroke-width=".6" stroke-linejoin="round">S</text></svg>
<svg style="left:403px;top:122px;" width="16" height="16" viewBox="0 0 16 16"><text x="3.5" y="14.5" font-size="17" fill="#a8a8a8" font-weight="bold" font-family="Liberation Sans,sans-serif" textLength="8.5" lengthAdjust="spacingAndGlyphs" stroke="#a8a8a8" stroke-width="1" stroke-linejoin="round">M</text></svg>
<svg style="left:426px;top:122px;" width="16" height="16" viewBox="0 0 16 16"><text x="4" y="14.5" font-size="17" fill="#a8a8a8" font-weight="bold" font-family="Liberation Sans,sans-serif" textLength="8.5" lengthAdjust="spacingAndGlyphs" stroke="#a8a8a8" stroke-width="1" stroke-linejoin="round">K</text></svg>
<svg style="left:448px;top:122px;" width="16" height="16" viewBox="0 0 16 16"><path d="M2.500 12.500l2-7M12.500 12.500l2-7M6 9h5" stroke="#a8a8a8" stroke-width="1.500"/></svg>
<svg style="left:471px;top:122px;" width="16" height="16" viewBox="0 0 16 16"><text x="3" y="12.5" font-size="13" fill="#a8a8a8" font-weight="bold" font-family="Liberation Sans,sans-serif" >~</text></svg>
<svg style="left:495px;top:122px;" width="16" height="16" viewBox="0 0 16 16"><path d="M4.500 15.500l.5-4.500 5-9q2-.500 3 1.500l-5 9z" fill="#a8a8a8"/><path d="M6.500 11.500l4.500-8" stroke="#e4e4e4"/></svg>
<div style="left:516px;top:117px;width:105px;height:26px;border-right:1px solid #a6a6a6;border-bottom:1px solid #a6a6a6;border-top:1px solid #fbfbfb;border-left:1px solid #fbfbfb;"></div>
<div style="left:520px;top:120px;width:1px;height:20px;background:#fbfbfb;"></div>
<div style="left:521px;top:120px;width:1px;height:20px;background:#a6a6a6;"></div>
<div style="left:520px;top:140px;width:2px;height:1px;background:#a6a6a6;"></div>
<svg style="left:531px;top:122px;" width="16" height="16" viewBox="0 0 16 16"><text x="5.2" y="13" font-size="13" fill="#a8a8a8" font-weight="bold" font-family="Liberation Sans,sans-serif" stroke="#a8a8a8" stroke-width=".4">:</text></svg>
<svg style="left:554px;top:122px;" width="16" height="16" viewBox="0 0 16 16"><text x="5.2" y="13" font-size="13" fill="#a8a8a8" font-weight="bold" font-family="Liberation Sans,sans-serif" stroke="#a8a8a8" stroke-width=".4">;</text></svg>
<svg style="left:575px;top:122px;" width="16" height="16" viewBox="0 0 16 16"><path d="M2 2.500h8M8 .500l2.500 2-2.500 2" fill="none" stroke="#a8a8a8"/><g fill="#a8a8a8" shape-rendering="crispEdges"><rect x="3" y="6" width="2" height="1"/><rect x="6" y="6" width="3" height="1"/><rect x="10" y="6" width="3" height="1"/><rect x="3" y="8" width="3" height="1"/><rect x="7" y="8" width="2" height="1"/><rect x="10" y="8" width="3" height="1"/><rect x="3" y="11" width="2" height="1"/><rect x="6" y="11" width="1" height="1"/><rect x="8" y="11" width="2" height="1"/><rect x="11" y="11" width="2" height="1"/><rect x="3" y="13" width="2" height="1"/><rect x="6" y="13" width="2" height="1"/><rect x="9" y="13" width="1" height="1"/><rect x="11" y="13" width="2" height="1"/></g></svg>
<svg style="left:598px;top:122px;" width="16" height="16" viewBox="0 0 16 16"><g fill="#a8a8a8" shape-rendering="crispEdges"><rect x="3" y="1" width="2" height="1"/><rect x="6" y="1" width="1" height="1"/><rect x="8" y="1" width="2" height="1"/><rect x="11" y="1" width="2" height="1"/><rect x="3" y="3" width="2" height="1"/><rect x="6" y="3" width="2" height="1"/><rect x="9" y="3" width="1" height="1"/><rect x="11" y="3" width="2" height="1"/><rect x="3" y="6" width="2" height="1"/><rect x="6" y="6" width="3" height="1"/><rect x="10" y="6" width="3" height="1"/><rect x="3" y="8" width="3" height="1"/><rect x="7" y="8" width="2" height="1"/><rect x="10" y="8" width="3" height="1"/></g><path d="M2 12.500h8M8 10.500l2.500 2-2.500 2" fill="none" stroke="#a8a8a8"/></svg>
<div style="left:621px;top:117px;width:59px;height:26px;border-right:1px solid #a6a6a6;border-bottom:1px solid #a6a6a6;border-top:1px solid #fbfbfb;border-left:1px solid #fbfbfb;"></div>
<div style="left:625px;top:120px;width:1px;height:20px;background:#fbfbfb;"></div>
<div style="left:626px;top:120px;width:1px;height:20px;background:#a6a6a6;"></div>
<div style="left:625px;top:140px;width:2px;height:1px;background:#a6a6a6;"></div>
<svg style="left:635px;top:122px;" width="16" height="16" viewBox="0 0 16 16"><path d="M1.500 2v10h3M6.500 4v7M10.500 4v7" fill="none" stroke="#a8a8a8"/><path d="M4 10.500l2.500 3 2.500-3zM8.500 10.500l2 2.500 2-2.500z" fill="#a8a8a8"/><g fill="#a8a8a8" shape-rendering="crispEdges"><rect x="8" y="12" width="6" height="2"/></g></svg>
<svg style="left:658px;top:122px;" width="16" height="16" viewBox="0 0 16 16"><path d="M2.500 0v6h3M5.500 1v6M8.500 3v5h6v5M11.500 8v5" fill="none" stroke="#a8a8a8"/><path d="M4 6l1.500 2.500 1.500-2.500zM10 12l1.500 2.500 1.500-2.500zM13 12l1.500 2.500 1.500-2.500zM7 2l1.500 2.500 1.500-2.500z" fill="#a8a8a8"/></svg>
<div style="left:680px;top:117px;width:128px;height:26px;border-right:1px solid #a6a6a6;border-bottom:1px solid #a6a6a6;border-top:1px solid #fbfbfb;border-left:1px solid #fbfbfb;"></div>
<div style="left:684px;top:120px;width:1px;height:20px;background:#fbfbfb;"></div>
<div style="left:685px;top:120px;width:1px;height:20px;background:#a6a6a6;"></div>
<div style="left:684px;top:140px;width:2px;height:1px;background:#a6a6a6;"></div>
<svg style="left:693px;top:122px;" width="16" height="16" viewBox="0 0 16 16"><g fill="#a8a8a8" shape-rendering="crispEdges"><rect x="6" y="1" width="4" height="4"/><rect x="7" y="5" width="2" height="1"/><rect x="3" y="6" width="10" height="1"/><rect x="3" y="7" width="3" height="3"/><rect x="10" y="7" width="3" height="3"/><rect x="4" y="10" width="1" height="2"/><rect x="11" y="10" width="1" height="2"/><rect x="7" y="7" width="2" height="5"/><rect x="1" y="12" width="3" height="3"/><rect x="5" y="12" width="2" height="3"/><rect x="9" y="12" width="2" height="3"/><rect x="12" y="12" width="3" height="3"/><rect x="0" y="11" width="16" height="1"/></g></svg>
<svg style="left:716px;top:122px;" width="16" height="16" viewBox="0 0 16 16"><g fill="#a8a8a8" shape-rendering="crispEdges"><rect x="6" y="1" width="4" height="4"/><rect x="7" y="5" width="2" height="1"/><rect x="3" y="6" width="10" height="1"/><rect x="3" y="7" width="3" height="3"/><rect x="10" y="7" width="3" height="3"/><rect x="4" y="10" width="1" height="2"/><rect x="11" y="10" width="1" height="2"/><rect x="7" y="7" width="2" height="5"/><rect x="1" y="12" width="3" height="3"/><rect x="5" y="12" width="2" height="3"/><rect x="9" y="12" width="2" height="3"/><rect x="12" y="12" width="3" height="3"/><rect x="0" y="11" width="16" height="1"/></g></svg>
<svg style="left:739px;top:122px;" width="16" height="16" viewBox="0 0 16 16"><g transform="translate(0 16) scale(1 -1)"><g fill="#a8a8a8" shape-rendering="crispEdges"><rect x="6" y="1" width="4" height="4"/><rect x="7" y="5" width="2" height="1"/><rect x="3" y="6" width="10" height="1"/><rect x="3" y="7" width="3" height="3"/><rect x="10" y="7" width="3" height="3"/><rect x="4" y="10" width="1" height="2"/><rect x="11" y="10" width="1" height="2"/><rect x="7" y="7" width="2" height="5"/><rect x="1" y="12" width="3" height="3"/><rect x="5" y="12" width="2" height="3"/><rect x="9" y="12" width="2" height="3"/><rect x="12" y="12" width="3" height="3"/><rect x="0" y="11" width="16" height="1"/></g></g></svg>
<svg style="left:762px;top:122px;" width="16" height="16" viewBox="0 0 16 16"><g fill="#a8a8a8" shape-rendering="crispEdges"><rect x="6" y="1" width="4" height="4"/><rect x="7" y="5" width="2" height="1"/><rect x="3" y="6" width="10" height="1"/><rect x="3" y="7" width="3" height="3"/><rect x="10" y="7" width="3" height="3"/><rect x="4" y="10" width="1" height="2"/><rect x="11" y="10" width="1" height="2"/><rect x="7" y="7" width="2" height="5"/><rect x="1" y="12" width="3" height="3"/><rect x="5" y="12" width="2" height="3"/><rect x="9" y="12" width="2" height="3"/><rect x="12" y="12" width="3" height="3"/><rect x="0" y="11" width="16" height="1"/></g></svg>
<svg style="left:785px;top:122px;" width="16" height="16" viewBox="0 0 16 16"><g fill="#a8a8a8" shape-rendering="crispEdges"><rect x="6" y="1" width="4" height="4"/><rect x="7" y="5" width="2" height="1"/><rect x="3" y="6" width="10" height="1"/><rect x="3" y="7" width="3" height="3"/><rect x="10" y="7" width="3" height="3"/><rect x="4" y="10" width="1" height="2"/><rect x="11" y="10" width="1" height="2"/><rect x="7" y="7" width="2" height="5"/><rect x="1" y="12" width="3" height="3"/><rect x="5" y="12" width="2" height="3"/><rect x="9" y="12" width="2" height="3"/><rect x="12" y="12" width="3" height="3"/><rect x="0" y="11" width="16" height="1"/></g></svg>
<div style="left:18px;top:143px;width:82px;height:26px;border-right:1px solid #a6a6a6;border-bottom:1px solid #a6a6a6;border-top:1px solid #fbfbfb;border-left:1px solid #fbfbfb;"></div>
<div style="left:22px;top:146px;width:1px;height:20px;background:#fbfbfb;"></div>
<div style="left:23px;top:146px;width:1px;height:20px;background:#a6a6a6;"></div>
<div style="left:22px;top:166px;width:2px;height:1px;background:#a6a6a6;"></div>
<svg style="left:33px;top:149px;" width="16" height="16" viewBox="0 0 16 16"><rect x="1.500" y="1.500" width="13" height="13" rx="1.500" fill="#fff" stroke="#000" stroke-width="1.100"/><g fill="#1428ff" shape-rendering="crispEdges"><rect x="3" y="3" width="10" height="4"/></g><g fill="#000" shape-rendering="crispEdges"><rect x="4" y="9" width="2" height="2"/><rect x="7" y="9" width="2" height="2"/><rect x="10" y="9" width="2" height="2"/><rect x="4" y="12" width="2" height="2"/><rect x="7" y="12" width="2" height="2"/><rect x="10" y="12" width="2" height="2"/></g></svg>
<svg style="left:56px;top:148px;" width="16" height="16" viewBox="0 0 16 16"><path d="M3.500 .500h7l3 3v11.500h-10z" fill="#fff" stroke="#707070"/><path d="M10.500 .500v3h3" fill="none" stroke="#000"/><g fill="#000" shape-rendering="crispEdges"><rect x="3" y="15" width="11" height="1"/><rect x="13" y="4" width="1" height="12"/></g><circle cx="3" cy="4.500" r="2.200" fill="#00d8e8" stroke="#000"/><circle cx="7.500" cy="4.500" r="2.200" fill="#00d8e8" stroke="#000"/><path d="M9.500 4.500h2" stroke="#000"/><g fill="#1428ff" shape-rendering="crispEdges"><rect x="5" y="9" width="2" height="1"/><rect x="8" y="8" width="1" height="1"/><rect x="10" y="9" width="2" height="1"/><rect x="5" y="11" width="1" height="1"/><rect x="7" y="10" width="1" height="1"/><rect x="9" y="10" width="1" height="1"/><rect x="5" y="13" width="2" height="1"/></g></svg>
<svg style="left:79px;top:148px;" width="16" height="16" viewBox="0 0 16 16"><circle cx="11.90" cy="7.60" r="1.600" fill="#f8f000" stroke="#504000" stroke-width=".7"/><circle cx="10.90" cy="10.00" r="1.600" fill="#f8f000" stroke="#504000" stroke-width=".7"/><circle cx="8.50" cy="11.00" r="1.600" fill="#f8f000" stroke="#504000" stroke-width=".7"/><circle cx="6.10" cy="10.00" r="1.600" fill="#f8f000" stroke="#504000" stroke-width=".7"/><circle cx="5.10" cy="7.60" r="1.600" fill="#f8f000" stroke="#504000" stroke-width=".7"/><circle cx="6.10" cy="5.20" r="1.600" fill="#f8f000" stroke="#504000" stroke-width=".7"/><circle cx="8.50" cy="4.20" r="1.600" fill="#f8f000" stroke="#504000" stroke-width=".7"/><circle cx="10.90" cy="5.20" r="1.600" fill="#f8f000" stroke="#504000" stroke-width=".7"/><circle cx="8.500" cy="7.600" r="2.800" fill="#f8f000"/><circle cx="8.500" cy="7.600" r="1.300" fill="#f0f0f0" stroke="#504000" stroke-width=".8"/></svg>
<div style="left:100px;top:143px;width:82px;height:26px;border-right:1px solid #a6a6a6;border-bottom:1px solid #a6a6a6;border-top:1px solid #fbfbfb;border-left:1px solid #fbfbfb;"></div>
<div style="left:104px;top:146px;width:1px;height:20px;background:#fbfbfb;"></div>
<div style="left:105px;top:146px;width:1px;height:20px;background:#a6a6a6;"></div>
<div style="left:104px;top:166px;width:2px;height:1px;background:#a6a6a6;"></div>
<svg style="left:115px;top:149px;" width="16" height="16" viewBox="0 0 16 16"><rect x="5.500" y="0.500" width="9" height="8" fill="#fff" stroke="#202020"/><rect x="5" y="0" width="10" height="2" fill="#000050"/><rect x="3.500" y="3.500" width="9" height="8" fill="#fff" stroke="#202020"/><rect x="3" y="3" width="10" height="2" fill="#000050"/><rect x="0.500" y="6.500" width="9" height="8" fill="#fff" stroke="#202020"/><rect x="0" y="6" width="10" height="2" fill="#000050"/></svg>
<svg style="left:136px;top:149px;" width="16" height="16" viewBox="0 0 16 16"><rect x=".500" y=".500" width="8" height="8" fill="#fff" stroke="#0000c0" stroke-width="1.400"/><rect x="5.500" y="8.500" width="9" height="6" fill="#fff" stroke="#0000c0" stroke-width="1.400"/><g fill="#0000c0" shape-rendering="crispEdges"><rect x="5" y="8" width="10" height="2"/></g><g fill="#0000c0" shape-rendering="crispEdges"><rect x="0" y="0" width="5" height="2"/></g><text x="4.5" y="9.5" font-size="11.5" fill="#f00000" font-weight="bold" font-family="Liberation Sans,sans-serif" >R</text></svg>
<svg style="left:159px;top:149px;" width="16" height="16" viewBox="0 0 16 16"><rect x="1.500" y="0.500" width="8" height="6" fill="#fff" stroke="#0000c0" stroke-width="1.400"/><rect x="1" y="0" width="9" height="2.500" fill="#0000c0"/><rect x="4.500" y="4.500" width="8" height="6" fill="#fff" stroke="#0000c0" stroke-width="1.400"/><rect x="4" y="4" width="9" height="2.500" fill="#0000c0"/><rect x="7.500" y="8.500" width="8" height="6" fill="#fff" stroke="#0000c0" stroke-width="1.400"/><rect x="7" y="8" width="9" height="2.500" fill="#0000c0"/></svg>
<div style="left:182px;top:143px;width:82px;height:26px;border-right:1px solid #a6a6a6;border-bottom:1px solid #a6a6a6;border-top:1px solid #fbfbfb;border-left:1px solid #fbfbfb;"></div>
<div style="left:186px;top:146px;width:1px;height:20px;background:#fbfbfb;"></div>
<div style="left:187px;top:146px;width:1px;height:20px;background:#a6a6a6;"></div>
<div style="left:186px;top:166px;width:2px;height:1px;background:#a6a6a6;"></div>
<svg style="left:197px;top:149px;" width="16" height="16" viewBox="0 0 16 16"><text x="2" y="14" font-size="17" fill="#a8a8a8" font-weight="bold" font-family="Liberation Serif,sans-serif" font-style="italic" stroke="#a8a8a8" stroke-width=".5">f</text></svg>
<svg style="left:220px;top:149px;" width="16" height="16" viewBox="0 0 16 16"><text x="-1" y="14" font-size="17" fill="#a8a8a8" font-weight="bold" font-family="Liberation Serif,sans-serif" font-style="italic" stroke="#a8a8a8" stroke-width=".5">f</text><ellipse cx="9.500" cy="11" rx="2.500" ry="3.500" fill="#a8a8a8"/></svg>
<svg style="left:242px;top:149px;" width="16" height="16" viewBox="0 0 16 16"><text x="-1" y="14" font-size="17" fill="#a8a8a8" font-weight="bold" font-family="Liberation Serif,sans-serif" font-style="italic" stroke="#a8a8a8" stroke-width=".5">f</text><text x="7.5" y="15.5" font-size="11" fill="#a8a8a8" font-weight="bold" font-family="Liberation Serif,sans-serif" >t</text></svg>
<div style="left:18px;top:169px;width:793px;height:28px;border-right:1px solid #a6a6a6;border-bottom:1px solid #a6a6a6;border-top:1px solid #fbfbfb;border-left:1px solid #fbfbfb;"></div>
<div style="left:22px;top:172px;width:1px;height:22px;background:#fbfbfb;"></div>
<div style="left:23px;top:172px;width:1px;height:22px;background:#a6a6a6;"></div>
<div style="left:22px;top:194px;width:2px;height:1px;background:#a6a6a6;"></div>
<div style="left:29px;top:173px;width:129px;height:21px;border:1px solid #707070;border-radius:3.500px;background:linear-gradient(#f3f3f3 0%,#ececec 47%,#dedede 50%,#d0d0d0 100%);box-shadow:inset 0 0 0 1px rgba(255,255,255,.75);"></div>
<svg style="left:145px;top:182px;" width="8" height="4" viewBox="0 0 8 4"><path d="M0 0h7l-3.500 4z" fill="#000"/></svg>
<div style="left:160px;top:173px;width:10px;height:10px;border:1px solid #d6d6d6;background:#f6f6f6;"></div>
<svg style="left:163px;top:176px;" width="4" height="5" viewBox="0 0 4 5"><path d="M3 0v5l-3-2.500z" fill="#9a9a9a"/></svg>
<div style="left:160px;top:183px;width:10px;height:10px;border:1px solid #d6d6d6;background:#f6f6f6;"></div>
<svg style="left:164px;top:186px;" width="4" height="5" viewBox="0 0 4 5"><path d="M0 0v5l3-2.500z" fill="#9a9a9a"/></svg>
<svg style="left:170px;top:173px;shape-rendering:crispEdges;" width="626" height="19" viewBox="0 0 626 19"><rect x="0" y="0" width="77" height="19" fill="#ffaa00"/><rect x="77" y="0" width="2" height="19" fill="#8b1a1a"/><rect x="79" y="0" width="30" height="19" fill="#ffaa00"/><rect x="109" y="0" width="1.5" height="19" fill="#8b1a1a"/><rect x="110.5" y="0" width="39.5" height="19" fill="#ffaa00"/><rect x="150" y="0" width="1" height="19" fill="#8b1a1a"/><rect x="151" y="0" width="26" height="19" fill="#ffaa00"/><rect x="177" y="0" width="10" height="19" fill="#8b1a1a"/><rect x="187" y="0" width="7" height="19" fill="#ffaa00"/><rect x="194" y="0" width="1" height="19" fill="#8b1a1a"/><rect x="195" y="0" width="2" height="19" fill="#ffaa00"/><rect x="197" y="0" width="2" height="19" fill="#8b1a1a"/><rect x="199" y="0" width="12" height="19" fill="#00aaff"/><rect x="211" y="0" width="10" height="19" fill="#8b1a1a"/><rect x="221" y="0" width="7" height="19" fill="#ffaa00"/><rect x="228" y="0" width="1" height="19" fill="#8b1a1a"/><rect x="229" y="0" width="11" height="19" fill="#ffaa00"/><rect x="240" y="0" width="3" height="19" fill="#00aaff"/><rect x="243" y="0" width="8" height="19" fill="#ffaa00"/><rect x="251" y="0" width="9" height="19" fill="#00aaff"/><rect x="260" y="0" width="13" height="19" fill="#efefc0"/><rect x="273" y="0" width="2" height="19" fill="#505050"/><rect x="275" y="0" width="12" height="19" fill="#ff00ff"/><rect x="287" y="0" width="3" height="19" fill="#505050"/><rect x="290" y="0" width="1" height="19" fill="#efefc0"/><rect x="291" y="0" width="68" height="19" fill="#808000"/><rect x="359" y="0" width="3" height="19" fill="#505050"/><rect x="362" y="0" width="70" height="19" fill="#efefc0"/><rect x="432" y="0" width="1" height="19" fill="#808000"/><rect x="433" y="0" width="9" height="19" fill="#efefc0"/><rect x="442" y="0" width="1" height="19" fill="#808000"/><rect x="443" y="0" width="1" height="19" fill="#efefc0"/><rect x="444" y="0" width="2" height="19" fill="#808000"/><rect x="446" y="0" width="1.5" height="19" fill="#efefc0"/><rect x="447.5" y="0" width="6.5" height="19" fill="#808000"/><rect x="454" y="0" width="2" height="19" fill="#efefc0"/><rect x="456" y="0" width="16" height="19" fill="#808000"/><rect x="472" y="0" width="1.5" height="19" fill="#efefc0"/><rect x="473.5" y="0" width="24.5" height="19" fill="#808000"/><rect x="498" y="0" width="1" height="19" fill="#efefc0"/><rect x="499" y="0" width="24" height="19" fill="#808000"/><rect x="523" y="0" width="2" height="19" fill="#efefc0"/><rect x="525" y="0" width="7.5" height="19" fill="#808000"/><rect x="532.5" y="0" width="1.5" height="19" fill="#efefc0"/><rect x="534" y="0" width="8" height="19" fill="#808000"/><rect x="542" y="0" width="84" height="19" fill="#505050"/></svg>
<div style="left:170px;top:175px;width:2px;height:6px;background:#60e000;"></div>
<div style="left:796px;top:173px;width:10px;height:10px;border:1px solid #d6d6d6;background:#f6f6f6;"></div>
<svg style="left:800px;top:176px;" width="4" height="5" viewBox="0 0 4 5"><path d="M0 0v5l3-2.500z" fill="#9a9a9a"/></svg>
<div style="left:796px;top:183px;width:10px;height:10px;border:1px solid #d6d6d6;background:#f6f6f6;"></div>
<svg style="left:799px;top:186px;" width="4" height="5" viewBox="0 0 4 5"><path d="M3 0v5l-3-2.500z" fill="#9a9a9a"/></svg>
<div style="left:20px;top:200px;width:88px;height:19px;background:linear-gradient(#f4f4f4 0%,#efefef 50%,#e2e2e2 55%,#d8d8d8 100%);border:1px solid #9a9a9a;border-bottom:1px solid #8a8a8a;"></div>
<svg style="left:27px;top:201px;" width="16" height="16" viewBox="0 0 16 16"><path d="M1.500 .500h8l4 4v10h-12z" fill="#fff" stroke="#707070"/><path d="M9.500 .500v4h4" fill="none" stroke="#000"/><g fill="#000" shape-rendering="crispEdges"><rect x="1" y="14" width="13" height="1"/><rect x="13" y="4" width="1" height="11"/></g><g fill="#0000c8" shape-rendering="crispEdges"><rect x="4" y="3" width="4" height="1"/><rect x="6" y="5" width="5" height="1"/><rect x="4" y="7" width="7" height="1"/><rect x="6" y="9" width="5" height="1"/><rect x="4" y="11" width="7" height="1"/></g></svg>
<div class="b" style="left:48px;top:203px;">IDA View-A</div>
<div style="left:108px;top:200px;width:70px;height:19px;background:linear-gradient(#f4f4f4 0%,#efefef 50%,#e2e2e2 55%,#d8d8d8 100%);border:1px solid #9a9a9a;border-bottom:1px solid #8a8a8a;"></div>
<svg style="left:115px;top:201px;" width="16" height="16" viewBox="0 0 16 16"><path d="M3.500 1.500l5 3.500M3.500 5.500l5 1M3.500 9.500h5M3.500 13.500l5-2" stroke="#f00000" stroke-width="1"/><g fill="#f00000" shape-rendering="crispEdges"><rect x="2" y="1" width="3" height="1"/><rect x="3" y="0" width="1" height="3"/><rect x="2" y="5" width="3" height="1"/><rect x="3" y="4" width="1" height="3"/><rect x="2" y="9" width="3" height="1"/><rect x="3" y="8" width="1" height="3"/><rect x="2" y="13" width="3" height="1"/><rect x="3" y="12" width="1" height="3"/></g><path d="M8.500 3.500h3l2 2v7h-5z" fill="#fff" stroke="#000"/><g fill="#0000a8" shape-rendering="crispEdges"><rect x="10" y="8" width="2" height="1"/><rect x="10" y="10" width="2" height="1"/></g><g fill="#000" shape-rendering="crispEdges"><rect x="11" y="5" width="1" height="1"/></g></svg>
<div class="b" style="left:136px;top:203px;">Exports</div>
<div style="left:178px;top:200px;width:67px;height:19px;background:linear-gradient(#f4f4f4 0%,#efefef 50%,#e2e2e2 55%,#d8d8d8 100%);border:1px solid #9a9a9a;border-bottom:1px solid #8a8a8a;"></div>
<svg style="left:185px;top:201px;" width="16" height="16" viewBox="0 0 16 16"><path d="M8.500 1.500l-4 2.500M8.500 5.500h-3M8.500 10.500h-3M8.500 14.500l-3-2" stroke="#f00000" stroke-width="1"/><g fill="#f00000" shape-rendering="crispEdges"><rect x="7" y="1" width="3" height="1"/><rect x="8" y="0" width="1" height="3"/><rect x="7" y="5" width="3" height="1"/><rect x="8" y="4" width="1" height="3"/><rect x="7" y="10" width="3" height="1"/><rect x="8" y="9" width="1" height="3"/><rect x="7" y="14" width="3" height="1"/><rect x="8" y="13" width="1" height="3"/></g><path d="M.500 3.500h3l2 2v7h-5z" fill="#fff" stroke="#000"/><g fill="#0000a8" shape-rendering="crispEdges"><rect x="2" y="8" width="2" height="1"/><rect x="2" y="10" width="2" height="1"/></g><path d="M10.500 .500h3l2 2v4h-5zM10.500 9.500h3l2 2v4h-5z" fill="#fff" stroke="#000"/><g fill="#000" shape-rendering="crispEdges"><rect x="12" y="2" width="1" height="2"/><rect x="12" y="3" width="2" height="1"/><rect x="12" y="11" width="1" height="2"/><rect x="12" y="12" width="2" height="1"/></g></svg>
<div class="b" style="left:206px;top:203px;">Imports</div>
<div style="left:245px;top:200px;width:78px;height:19px;background:linear-gradient(#f4f4f4 0%,#efefef 50%,#e2e2e2 55%,#d8d8d8 100%);border:1px solid #9a9a9a;border-bottom:1px solid #8a8a8a;"></div>
<svg style="left:252px;top:201px;" width="16" height="16" viewBox="0 0 16 16"><path d="M.500 1.500h3l3 3" fill="none" stroke="#0028c0" stroke-width="2"/><path d="M8.500 6.500l-4.500-.500 4-4z" fill="#0028c0"/><rect x="9.500" y="4.500" width="6" height="9" fill="#fff" stroke="#9a9a9a"/><rect x="7.500" y="6.500" width="6" height="9" fill="#fff" stroke="#808080"/><text x="8.8" y="14.2" font-size="9.5" fill="#f00000" font-weight="bold" font-family="Liberation Sans,sans-serif" font-style="italic">f</text></svg>
<div class="b" style="left:273px;top:203px;">Functions</div>
<div style="left:323px;top:197px;width:70px;height:23px;background:#fff;border:1px solid #b0b0b0;border-bottom:none;"></div>
<svg style="left:331px;top:199px;" width="16" height="16" viewBox="0 0 16 16"><g fill="#00a000" shape-rendering="crispEdges"><rect x="1" y="5" width="1" height="3"/><rect x="3" y="5" width="1" height="3"/><rect x="11" y="5" width="1" height="3"/><rect x="13" y="5" width="1" height="3"/><rect x="4" y="10" width="1" height="1"/><rect x="6" y="10" width="1" height="1"/><rect x="8" y="10" width="1" height="1"/><rect x="10" y="10" width="1" height="1"/></g></svg>
<div class="b" style="left:354px;top:201px;">Strings</div>
<div style="left:393px;top:200px;width:80px;height:19px;background:linear-gradient(#f4f4f4 0%,#efefef 50%,#e2e2e2 55%,#d8d8d8 100%);border:1px solid #9a9a9a;border-bottom:1px solid #8a8a8a;"></div>
<svg style="left:400px;top:201px;" width="16" height="16" viewBox="0 0 16 16"><g fill="#000" shape-rendering="crispEdges"><rect x="7" y="0" width="2" height="2"/><rect x="6" y="2" width="4" height="1"/></g><path d="M7 3l-2.500 12M9 3l2.500 12M3.500 15h2.500M10 15h2.500M6.500 6.500l4.500 5M9.500 6.500l-4.500 6.500M5 13l6-2" fill="none" stroke="#000" stroke-width="1.100"/></svg>
<div class="b" style="left:421px;top:203px;">Structures</div>
<div style="left:473px;top:200px;width:64px;height:19px;background:linear-gradient(#f4f4f4 0%,#efefef 50%,#e2e2e2 55%,#d8d8d8 100%);border:1px solid #9a9a9a;border-bottom:1px solid #8a8a8a;"></div>
<svg style="left:480px;top:201px;" width="16" height="16" viewBox="0 0 16 16"><text x="-0.5" y="11.5" font-size="13.5" fill="#00a000" font-weight="bold" font-family="Liberation Serif,sans-serif" >En</text></svg>
<div class="b" style="left:501px;top:203px;">Enums</div>
<div style="left:18px;top:218px;width:1018px;height:6px;background:#fff;border:1px solid #9a9aa8;"></div>
<div style="left:324px;top:218px;width:68px;height:2px;background:#fff;"></div>
<div style="left:18px;top:226px;width:1020px;height:523px;background:#fdfdfd;border-top:1px solid #6a6a6a;border-left:1px solid #a8a8a8;"></div>
<div style="left:19px;top:227px;width:1px;height:522px;background:#585858;"></div>
<div style="left:1020px;top:227px;width:17px;height:522px;background:#f0f0f0;"></div>
<svg style="left:1024px;top:234px;" width="7" height="4" viewBox="0 0 7 4"><path d="M0 4h7l-3.500-4z" fill="#505050"/></svg>
<svg style="left:1024px;top:739px;" width="7" height="4" viewBox="0 0 7 4"><path d="M0 0h7l-3.500 4z" fill="#505050"/></svg>
<div style="left:1020px;top:245px;width:15px;height:357px;border:1px solid #979797;border-radius:2px;background:linear-gradient(90deg,#f5f5f5,#e6e6e6 50%,#d4d4d4);box-shadow:inset 0 0 0 1px rgba(255,255,255,.7);"></div>
<div style="left:1024px;top:419px;width:7px;height:1px;background:#6a6a6a;"></div>
<div style="left:1024px;top:421px;width:7px;height:1px;background:#6a6a6a;"></div>
<div style="left:1024px;top:423px;width:7px;height:1px;background:#6a6a6a;"></div>
<div style="left:1024px;top:425px;width:7px;height:1px;background:#6a6a6a;"></div>
<div style="left:20px;top:227px;width:701px;height:522px;background:linear-gradient(#cfdae9 0,#d9e2ef 12px,#dce5f1 30px,#e1e8f3 60px,#e3eaf5 100%);border:1px solid #545a64;border-bottom:none;border-radius:5px 5px 0 0;box-shadow:inset 0 0 0 1px #eef3fa;"></div>
<svg style="left:31px;top:237px;" width="16" height="16" viewBox="0 0 16 16"><path d="M1.500 .500h8l4 4v10h-12z" fill="#fff" stroke="#707070"/><path d="M9.500 .500v4h4" fill="none" stroke="#000"/><g fill="#000" shape-rendering="crispEdges"><rect x="1" y="14" width="13" height="1"/><rect x="13" y="4" width="1" height="11"/></g><g fill="#0000c8" shape-rendering="crispEdges"><rect x="4" y="3" width="4" height="1"/><rect x="6" y="5" width="5" height="1"/><rect x="4" y="7" width="7" height="1"/><rect x="6" y="9" width="5" height="1"/><rect x="4" y="11" width="7" height="1"/></g></svg>
<div class="t" style="left:50px;top:239px;font-size:12px;color:#484848;">IDA View-A</div>
<div style="left:615px;top:237px;width:30px;height:17px;border:1px solid #9dabc3;border-radius:3px;background:linear-gradient(#dfe8f4,#cfdbeb 50%,#c8d5e7 52%,#d2deed);box-shadow:inset 0 0 0 1px rgba(255,255,255,.35);"></div>
<svg style="left:624px;top:245px;" width="12" height="5" viewBox="0 0 12 5"><rect x="0.500" y="0.500" width="10" height="3.500" rx="1" fill="#fff" stroke="#555c66"/></svg>
<div style="left:648px;top:237px;width:30px;height:17px;border:1px solid #9dabc3;border-radius:3px;background:linear-gradient(#dfe8f4,#cfdbeb 50%,#c8d5e7 52%,#d2deed);box-shadow:inset 0 0 0 1px rgba(255,255,255,.35);"></div>
<svg style="left:658px;top:241px;" width="11" height="9" viewBox="0 0 11 9"><rect x="0.500" y="0.500" width="9" height="7" rx="1" fill="#fff" stroke="#555c66" stroke-width="1.200"/><rect x="3" y="3" width="4" height="2" fill="#fff" stroke="#555c66"/></svg>
<div style="left:681px;top:237px;width:30px;height:17px;border:1px solid #9dabc3;border-radius:3px;background:linear-gradient(#dfe8f4,#cfdbeb 50%,#c8d5e7 52%,#d2deed);box-shadow:inset 0 0 0 1px rgba(255,255,255,.35);"></div>
<svg style="left:690px;top:241px;" width="12" height="9" viewBox="0 0 12 9"><path d="M1 .5h2.500l2 2.300 2-2.300h2.500l-3.200 3.800 3.200 3.700h-2.500l-2-2.300-2 2.300h-2.500l3.200-3.700z" fill="#fff" stroke="#555c66" stroke-linejoin="round"/></svg>
<div style="left:28px;top:257px;width:667px;height:492px;background:#2f2f2f;"></div>
<div style="left:103px;top:257px;width:3px;height:492px;background:#fff;"></div>
<div style="left:695px;top:257px;width:18px;height:492px;background:#f0f0f0;"></div>
<svg style="left:701px;top:265px;" width="7" height="4" viewBox="0 0 7 4"><path d="M0 4h7l-3.500-4z" fill="#505050"/></svg>
<div style="left:697px;top:275px;width:15px;height:15px;border:1px solid #979797;border-radius:2px;background:linear-gradient(90deg,#f5f5f5,#d8d8d8);"></div>
<div style="left:722px;top:229px;width:297px;height:520px;background:linear-gradient(#cfdae9 0,#d9e2ef 12px,#dce5f1 30px,#e1e8f3 60px,#e3eaf5 100%);border:1px solid #5e6a7a;border-bottom:1px solid #5e6a7a;border-radius:5px 5px 0 0;box-shadow:inset 0 0 0 1px #eef3fa;"></div>
<svg style="left:732px;top:239px;" width="16" height="16" viewBox="0 0 16 16"><g fill="#00a000" shape-rendering="crispEdges"><rect x="1" y="5" width="1" height="3"/><rect x="3" y="5" width="1" height="3"/><rect x="11" y="5" width="1" height="3"/><rect x="13" y="5" width="1" height="3"/><rect x="4" y="10" width="1" height="1"/><rect x="6" y="10" width="1" height="1"/><rect x="8" y="10" width="1" height="1"/><rect x="10" y="10" width="1" height="1"/></g></svg>
<div class="t" style="left:752px;top:241px;font-size:12px;color:#4c4c4c;">Strings window</div>
<div style="left:913px;top:239px;width:30px;height:17px;border:1px solid #9dabc3;border-radius:3px;background:linear-gradient(#dfe8f4,#cfdbeb 50%,#c8d5e7 52%,#d2deed);box-shadow:inset 0 0 0 1px rgba(255,255,255,.35);"></div>
<svg style="left:922px;top:247px;" width="12" height="5" viewBox="0 0 12 5"><rect x="0.500" y="0.500" width="10" height="3.500" rx="1" fill="#fff" stroke="#555c66"/></svg>
<div style="left:946px;top:239px;width:30px;height:17px;border:1px solid #9dabc3;border-radius:3px;background:linear-gradient(#dfe8f4,#cfdbeb 50%,#c8d5e7 52%,#d2deed);box-shadow:inset 0 0 0 1px rgba(255,255,255,.35);"></div>
<svg style="left:956px;top:243px;" width="11" height="9" viewBox="0 0 11 9"><rect x="0.500" y="0.500" width="9" height="7" rx="1" fill="#fff" stroke="#555c66" stroke-width="1.200"/><rect x="3" y="3" width="4" height="2" fill="#fff" stroke="#555c66"/></svg>
<div style="left:979px;top:239px;width:30px;height:17px;border:1px solid #9dabc3;border-radius:3px;background:linear-gradient(#dfe8f4,#cfdbeb 50%,#c8d5e7 52%,#d2deed);box-shadow:inset 0 0 0 1px rgba(255,255,255,.35);"></div>
<svg style="left:988px;top:243px;" width="12" height="9" viewBox="0 0 12 9"><path d="M1 .5h2.500l2 2.300 2-2.300h2.500l-3.200 3.800 3.200 3.700h-2.500l-2-2.300-2 2.300h-2.500l3.200-3.700z" fill="#fff" stroke="#555c66" stroke-linejoin="round"/></svg>
<div style="left:28px;top:257px;width:667px;height:492px;overflow:hidden;">
<div class="m" style="left:78px;top:0px;color:#808080">.text:00401000</div>
<div class="m" style="left:78px;top:14px;color:#808080">.text:00401000</div>
<div class="m" style="left:78px;top:28px;color:#808080">.text:00401000</div>
<div class="m" style="left:183px;top:28px;color:#f0f0f0">; int __cdecl sub_401000(DWORD dwMessageId,char *)</div>
<div class="m" style="left:78px;top:42px;color:#808080">.text:00401000</div>
<div class="m" style="left:183px;top:42px;color:#a4d01e">sub_401000</div>
<div class="m" style="left:295px;top:42px;color:#a4d01e">proc near</div>
<div class="m" style="left:463px;top:42px;color:#f2a766">; CODE XREF: sub_4010B0+25</div>
<div class="m" style="left:645px;top:42px;color:#f2a766;font-weight:bold;transform:translateY(1px) scale(1.100,1.800);transform-origin:50% 64%">↓</div>
<div class="m" style="left:652px;top:42px;color:#f2a766">p</div>
<div class="m" style="left:78px;top:56px;color:#808080">.text:00401000</div>
<div class="m" style="left:463px;top:56px;color:#f2a766">; sub_401150+38</div>
<div class="m" style="left:568px;top:56px;color:#f2a766;font-weight:bold;transform:translateY(1px) scale(1.100,1.800);transform-origin:50% 64%">↓</div>
<div class="m" style="left:575px;top:56px;color:#f2a766">p ...</div>
<div class="m" style="left:78px;top:70px;color:#808080">.text:00401000</div>
<div class="m" style="left:78px;top:84px;color:#808080">.text:00401000</div>
<div class="m" style="left:183px;top:84px;color:#ff9818">hMem</div>
<div class="m" style="left:295px;top:84px;color:#d4d4d4">= dword ptr </div>
<div class="m" style="left:379px;top:84px;color:#e0683c">-404h</div>
<div class="m" style="left:78px;top:98px;color:#808080">.text:00401000</div>
<div class="m" style="left:183px;top:98px;color:#ff9818">var_400</div>
<div class="m" style="left:295px;top:98px;color:#d4d4d4">= byte ptr </div>
<div class="m" style="left:372px;top:98px;color:#e0683c">-400h</div>
<div class="m" style="left:78px;top:112px;color:#808080">.text:00401000</div>
<div class="m" style="left:183px;top:112px;color:#ff9818">dwMessageId</div>
<div class="m" style="left:295px;top:112px;color:#d4d4d4">= dword ptr </div>
<div class="m" style="left:386px;top:112px;color:#e0683c">4</div>
<div class="m" style="left:78px;top:126px;color:#808080">.text:00401000</div>
<div class="m" style="left:183px;top:126px;color:#ff9818">arg_4</div>
<div class="m" style="left:295px;top:126px;color:#d4d4d4">= dword ptr </div>
<div class="m" style="left:386px;top:126px;color:#e0683c">8</div>
<div class="m" style="left:78px;top:140px;color:#808080">.text:00401000</div>
<div class="m" style="left:78px;top:154px;color:#808080">.text:00401000</div>
<div class="m" style="left:295px;top:154px;color:#f0f0f0">mov</div>
<div class="m" style="left:351px;top:154px;color:#b4bcc4">eax, [esp+</div>
<div class="m" style="left:421px;top:154px;color:#ff9818">arg_4</div>
<div class="m" style="left:456px;top:154px;color:#b4bcc4">]</div>
<svg style="left:67px;top:156px" width="5" height="5" viewBox="0 0 5 5"><circle cx="2" cy="2.100" r="2.100" fill="#4c4cff"/></svg>
<div class="m" style="left:78px;top:168px;color:#808080">.text:00401004</div>
<div class="m" style="left:295px;top:168px;color:#f0f0f0">sub</div>
<div class="m" style="left:351px;top:168px;color:#b4bcc4">esp, </div>
<div class="m" style="left:386px;top:168px;color:#e0683c">404h</div>
<svg style="left:67px;top:170px" width="5" height="5" viewBox="0 0 5 5"><circle cx="2" cy="2.100" r="2.100" fill="#4c4cff"/></svg>
<div class="m" style="left:78px;top:182px;color:#808080">.text:0040100A</div>
<div class="m" style="left:295px;top:182px;color:#f0f0f0">push</div>
<div class="m" style="left:351px;top:182px;color:#b4bcc4">esi</div>
<svg style="left:67px;top:184px" width="5" height="5" viewBox="0 0 5 5"><circle cx="2" cy="2.100" r="2.100" fill="#4c4cff"/></svg>
<div class="m" style="left:78px;top:196px;color:#ffb000">.text:0040100B</div>
<div class="m" style="left:295px;top:196px;color:#f0f0f0">mov</div>
<div class="m" style="left:351px;top:196px;color:#b4bcc4">esi, ds:</div>
<div class="m" style="left:407px;top:196px;color:#f070f0">fprintf</div>
<svg style="left:67px;top:198px" width="5" height="5" viewBox="0 0 5 5"><circle cx="2" cy="2.100" r="2.100" fill="#4c4cff"/></svg>
<div class="m" style="left:78px;top:210px;color:#808080">.text:00401011</div>
<div class="m" style="left:295px;top:210px;color:#f0f0f0">push</div>
<div class="m" style="left:351px;top:210px;color:#b4bcc4">edi</div>
<svg style="left:67px;top:212px" width="5" height="5" viewBox="0 0 5 5"><circle cx="2" cy="2.100" r="2.100" fill="#4c4cff"/></svg>
<div class="m" style="left:78px;top:224px;color:#808080">.text:00401012</div>
<div class="m" style="left:295px;top:224px;color:#f0f0f0">mov</div>
<div class="m" style="left:351px;top:224px;color:#b4bcc4">edi, ds:</div>
<div class="m" style="left:407px;top:224px;color:#f070f0">__iob_func</div>
<svg style="left:67px;top:226px" width="5" height="5" viewBox="0 0 5 5"><circle cx="2" cy="2.100" r="2.100" fill="#4c4cff"/></svg>
<div class="m" style="left:78px;top:238px;color:#808080">.text:00401018</div>
<div class="m" style="left:295px;top:238px;color:#f0f0f0">test</div>
<div class="m" style="left:351px;top:238px;color:#b4bcc4">eax, eax</div>
<svg style="left:67px;top:240px" width="5" height="5" viewBox="0 0 5 5"><circle cx="2" cy="2.100" r="2.100" fill="#4c4cff"/></svg>
<div class="m" style="left:78px;top:252px;color:#808080">.text:0040101A</div>
<div class="m" style="left:295px;top:252px;color:#f0f0f0">jz</div>
<div class="m" style="left:351px;top:252px;color:#b4bcc4">short </div>
<div class="m" style="left:393px;top:252px;color:#ffd828">loc_401028</div>
<svg style="left:67px;top:254px" width="5" height="5" viewBox="0 0 5 5"><circle cx="2" cy="2.100" r="2.100" fill="#4c4cff"/></svg>
<div class="m" style="left:78px;top:266px;color:#808080">.text:0040101C</div>
<div class="m" style="left:295px;top:266px;color:#f0f0f0">push</div>
<div class="m" style="left:351px;top:266px;color:#b4bcc4">eax</div>
<div class="m" style="left:463px;top:266px;color:#ecc8c8">; char *</div>
<svg style="left:67px;top:268px" width="5" height="5" viewBox="0 0 5 5"><circle cx="2" cy="2.100" r="2.100" fill="#4c4cff"/></svg>
<div class="m" style="left:78px;top:280px;color:#808080">.text:0040101D</div>
<div class="m" style="left:295px;top:280px;color:#f0f0f0">call</div>
<div class="m" style="left:351px;top:280px;color:#b4bcc4">edi </div>
<div class="m" style="left:379px;top:280px;color:#8a8a8a">; </div>
<div class="m" style="left:393px;top:280px;color:#f070f0">__iob_func</div>
<svg style="left:67px;top:282px" width="5" height="5" viewBox="0 0 5 5"><circle cx="2" cy="2.100" r="2.100" fill="#4c4cff"/></svg>
<div class="m" style="left:78px;top:294px;color:#808080">.text:0040101F</div>
<div class="m" style="left:295px;top:294px;color:#f0f0f0">add</div>
<div class="m" style="left:351px;top:294px;color:#b4bcc4">eax, </div>
<div class="m" style="left:386px;top:294px;color:#e0683c">40h</div>
<svg style="left:67px;top:296px" width="5" height="5" viewBox="0 0 5 5"><circle cx="2" cy="2.100" r="2.100" fill="#4c4cff"/></svg>
<div class="m" style="left:78px;top:308px;color:#808080">.text:00401022</div>
<div class="m" style="left:295px;top:308px;color:#f0f0f0">push</div>
<div class="m" style="left:351px;top:308px;color:#b4bcc4">eax</div>
<div class="m" style="left:463px;top:308px;color:#ecc8c8">; FILE *</div>
<svg style="left:67px;top:310px" width="5" height="5" viewBox="0 0 5 5"><circle cx="2" cy="2.100" r="2.100" fill="#4c4cff"/></svg>
<div class="m" style="left:78px;top:322px;color:#808080">.text:00401023</div>
<div class="m" style="left:295px;top:322px;color:#f0f0f0">call</div>
<div class="m" style="left:351px;top:322px;color:#b4bcc4">esi </div>
<div class="m" style="left:379px;top:322px;color:#8a8a8a">; </div>
<div class="m" style="left:393px;top:322px;color:#f070f0">fprintf</div>
<svg style="left:67px;top:324px" width="5" height="5" viewBox="0 0 5 5"><circle cx="2" cy="2.100" r="2.100" fill="#4c4cff"/></svg>
<div class="m" style="left:78px;top:336px;color:#808080">.text:00401025</div>
<div class="m" style="left:295px;top:336px;color:#f0f0f0">add</div>
<div class="m" style="left:351px;top:336px;color:#b4bcc4">esp, </div>
<div class="m" style="left:386px;top:336px;color:#e0683c">8</div>
<svg style="left:67px;top:338px" width="5" height="5" viewBox="0 0 5 5"><circle cx="2" cy="2.100" r="2.100" fill="#4c4cff"/></svg>
<div class="m" style="left:78px;top:350px;color:#808080">.text:00401028</div>
<div class="m" style="left:78px;top:364px;color:#808080">.text:00401028</div>
<div class="m" style="left:183px;top:364px;color:#ffd828">loc_401028</div>
<div class="m" style="left:253px;top:364px;color:#f0f0f0">:</div>
<div class="m" style="left:463px;top:364px;color:#f2a766">; CODE XREF: sub_401000+1A</div>
<div class="m" style="left:645px;top:364px;color:#f2a766;font-weight:bold;transform:translateY(1px) scale(1.100,1.800);transform-origin:50% 64%">↑</div>
<div class="m" style="left:652px;top:364px;color:#f2a766">j</div>
<div class="m" style="left:78px;top:378px;color:#808080">.text:00401028</div>
<div class="m" style="left:295px;top:378px;color:#f0f0f0">mov</div>
<div class="m" style="left:351px;top:378px;color:#b4bcc4">eax, [esp+</div>
<div class="m" style="left:421px;top:378px;color:#e0683c">40Ch</div>
<div class="m" style="left:449px;top:378px;color:#b4bcc4">+</div>
<div class="m" style="left:456px;top:378px;color:#ff9818">dwMessageId</div>
<div class="m" style="left:533px;top:378px;color:#b4bcc4">]</div>
<svg style="left:67px;top:380px" width="5" height="5" viewBox="0 0 5 5"><circle cx="2" cy="2.100" r="2.100" fill="#4c4cff"/></svg>
<div class="m" style="left:78px;top:392px;color:#808080">.text:0040102F</div>
<div class="m" style="left:295px;top:392px;color:#f0f0f0">test</div>
<div class="m" style="left:351px;top:392px;color:#b4bcc4">eax, eax</div>
<svg style="left:67px;top:394px" width="5" height="5" viewBox="0 0 5 5"><circle cx="2" cy="2.100" r="2.100" fill="#4c4cff"/></svg>
<div class="m" style="left:78px;top:406px;color:#808080">.text:00401031</div>
<div class="m" style="left:295px;top:406px;color:#f0f0f0">jz</div>
<div class="m" style="left:351px;top:406px;color:#b4bcc4">short </div>
<div class="m" style="left:393px;top:406px;color:#ffd828">loc_401082</div>
<svg style="left:67px;top:408px" width="5" height="5" viewBox="0 0 5 5"><circle cx="2" cy="2.100" r="2.100" fill="#4c4cff"/></svg>
<div class="m" style="left:78px;top:420px;color:#808080">.text:00401033</div>
<div class="m" style="left:295px;top:420px;color:#f0f0f0">push</div>
<div class="m" style="left:351px;top:420px;color:#e0683c">0</div>
<div class="m" style="left:463px;top:420px;color:#ecc8c8">; Arguments</div>
<svg style="left:67px;top:422px" width="5" height="5" viewBox="0 0 5 5"><circle cx="2" cy="2.100" r="2.100" fill="#4c4cff"/></svg>
<div class="m" style="left:78px;top:434px;color:#808080">.text:00401035</div>
<div class="m" style="left:295px;top:434px;color:#f0f0f0">push</div>
<div class="m" style="left:351px;top:434px;color:#e0683c">0</div>
<div class="m" style="left:463px;top:434px;color:#ecc8c8">; nSize</div>
<svg style="left:67px;top:436px" width="5" height="5" viewBox="0 0 5 5"><circle cx="2" cy="2.100" r="2.100" fill="#4c4cff"/></svg>
<div class="m" style="left:78px;top:448px;color:#808080">.text:00401037</div>
<div class="m" style="left:295px;top:448px;color:#f0f0f0">lea</div>
<div class="m" style="left:351px;top:448px;color:#b4bcc4">ecx, [esp+</div>
<div class="m" style="left:421px;top:448px;color:#e0683c">414h</div>
<div class="m" style="left:449px;top:448px;color:#b4bcc4">+</div>
<div class="m" style="left:456px;top:448px;color:#ff9818">hMem</div>
<div class="m" style="left:484px;top:448px;color:#b4bcc4">]</div>
<svg style="left:67px;top:450px" width="5" height="5" viewBox="0 0 5 5"><circle cx="2" cy="2.100" r="2.100" fill="#4c4cff"/></svg>
<div class="m" style="left:78px;top:462px;color:#808080">.text:0040103B</div>
<div class="m" style="left:295px;top:462px;color:#f0f0f0">push</div>
<div class="m" style="left:351px;top:462px;color:#b4bcc4">ecx</div>
<div class="m" style="left:463px;top:462px;color:#ecc8c8">; lpBuffer</div>
<svg style="left:67px;top:464px" width="5" height="5" viewBox="0 0 5 5"><circle cx="2" cy="2.100" r="2.100" fill="#4c4cff"/></svg>
<div class="m" style="left:78px;top:476px;color:#808080">.text:0040103C</div>
<div class="m" style="left:295px;top:476px;color:#f0f0f0">push</div>
<div class="m" style="left:351px;top:476px;color:#e0683c">400h</div>
<div class="m" style="left:463px;top:476px;color:#ecc8c8">; dwLanguageId</div>
<svg style="left:67px;top:478px" width="5" height="5" viewBox="0 0 5 5"><circle cx="2" cy="2.100" r="2.100" fill="#4c4cff"/></svg>
<svg style="left:0;top:0" width="75" height="492" viewBox="0 0 75 492"><path d="M55 262.500H70" fill="none" stroke="#b5673a" stroke-dasharray="5 5"/><path d="M55.500 262V377.500" fill="none" stroke="#b5673a" stroke-dasharray="5 5"/><path d="M55 382.500H62" stroke="#b5673a"/><path d="M60 378l5.500 4.500-5.500 4.500z" fill="#b5673a" fill-opacity=".7"/><path d="M55 416.500H70" fill="none" stroke="#b5673a" stroke-dasharray="5 5"/><path d="M55.500 416V492.500" fill="none" stroke="#b5673a" stroke-dasharray="5 5"/></svg>
</div>
<div style="left:730px;top:259px;width:281px;height:484px;background:#f0f0f0;"></div>
<div style="left:730px;top:259px;width:281px;height:461px;background:#fff;border:1px solid #828790;overflow:hidden;">
<div style="left:0;top:0;width:262px;height:24px;background:linear-gradient(#fff,#fff 50%,#f7f8fa 51%,#f1f2f4);border-bottom:1px solid #d5d5d5;"></div>
<div style="left:73px;top:0;width:1px;height:23px;background:#dedfe1;"></div>
<div style="left:146px;top:0;width:1px;height:23px;background:#dedfe1;"></div>
<div style="left:183px;top:0;width:1px;height:23px;background:#dedfe1;"></div>
<div class="s" style="left:7px;top:5px;font-size:11.500px;transform:scaleX(.9);">Address</div>
<div class="s" style="left:81px;top:5px;font-size:11.500px;transform:scaleX(.9);">Length</div>
<div class="s" style="left:154px;top:5px;font-size:11.500px;transform:scaleX(.9);">Type</div>
<div class="s" style="left:191px;top:5px;font-size:11.500px;transform:scaleX(.9);">String</div>
<svg style="left:5px;top:25px" width="16" height="16" viewBox="0 0 16 16"><g fill="#00a000" shape-rendering="crispEdges"><rect x="1" y="5" width="1" height="3"/><rect x="3" y="5" width="1" height="3"/><rect x="11" y="5" width="1" height="3"/><rect x="13" y="5" width="1" height="3"/><rect x="4" y="10" width="1" height="1"/><rect x="6" y="10" width="1" height="1"/><rect x="8" y="10" width="1" height="1"/><rect x="10" y="10" width="1" height="1"/></g></svg>
<div class="s" style="left:24px;top:26px;">.rdata:0...</div>
<div class="s" style="left:81px;top:26px;">00000008</div>
<div class="s" style="left:154px;top:26px;">C</div>
<div class="s" style="left:191px;top:26px;">strncpy</div>
<svg style="left:5px;top:42px" width="16" height="16" viewBox="0 0 16 16"><g fill="#00a000" shape-rendering="crispEdges"><rect x="1" y="5" width="1" height="3"/><rect x="3" y="5" width="1" height="3"/><rect x="11" y="5" width="1" height="3"/><rect x="13" y="5" width="1" height="3"/><rect x="4" y="10" width="1" height="1"/><rect x="6" y="10" width="1" height="1"/><rect x="8" y="10" width="1" height="1"/><rect x="10" y="10" width="1" height="1"/></g></svg>
<div class="s" style="left:24px;top:43px;">.rdata:0...</div>
<div class="s" style="left:81px;top:43px;">0000000B</div>
<div class="s" style="left:154px;top:43px;">C</div>
<div class="s" style="left:191px;top:43px;">__iob_func</div>
<svg style="left:5px;top:59px" width="16" height="16" viewBox="0 0 16 16"><g fill="#00a000" shape-rendering="crispEdges"><rect x="1" y="5" width="1" height="3"/><rect x="3" y="5" width="1" height="3"/><rect x="11" y="5" width="1" height="3"/><rect x="13" y="5" width="1" height="3"/><rect x="4" y="10" width="1" height="1"/><rect x="6" y="10" width="1" height="1"/><rect x="8" y="10" width="1" height="1"/><rect x="10" y="10" width="1" height="1"/></g></svg>
<div class="s" style="left:24px;top:60px;">.rdata:0...</div>
<div class="s" style="left:81px;top:60px;">00000008</div>
<div class="s" style="left:154px;top:60px;">C</div>
<div class="s" style="left:191px;top:60px;">fprintf</div>
<svg style="left:5px;top:76px" width="16" height="16" viewBox="0 0 16 16"><g fill="#00a000" shape-rendering="crispEdges"><rect x="1" y="5" width="1" height="3"/><rect x="3" y="5" width="1" height="3"/><rect x="11" y="5" width="1" height="3"/><rect x="13" y="5" width="1" height="3"/><rect x="4" y="10" width="1" height="1"/><rect x="6" y="10" width="1" height="1"/><rect x="8" y="10" width="1" height="1"/><rect x="10" y="10" width="1" height="1"/></g></svg>
<div class="s" style="left:24px;top:77px;">.rdata:0...</div>
<div class="s" style="left:81px;top:77px;">00000008</div>
<div class="s" style="left:154px;top:77px;">C</div>
<div class="s" style="left:191px;top:77px;">strrchr</div>
<svg style="left:5px;top:93px" width="16" height="16" viewBox="0 0 16 16"><g fill="#00a000" shape-rendering="crispEdges"><rect x="1" y="5" width="1" height="3"/><rect x="3" y="5" width="1" height="3"/><rect x="11" y="5" width="1" height="3"/><rect x="13" y="5" width="1" height="3"/><rect x="4" y="10" width="1" height="1"/><rect x="6" y="10" width="1" height="1"/><rect x="8" y="10" width="1" height="1"/><rect x="10" y="10" width="1" height="1"/></g></svg>
<div class="s" style="left:24px;top:94px;">.rdata:0...</div>
<div class="s" style="left:81px;top:94px;">00000008</div>
<div class="s" style="left:154px;top:94px;">C</div>
<div class="s" style="left:191px;top:94px;">strncmp</div>
<svg style="left:5px;top:110px" width="16" height="16" viewBox="0 0 16 16"><g fill="#00a000" shape-rendering="crispEdges"><rect x="1" y="5" width="1" height="3"/><rect x="3" y="5" width="1" height="3"/><rect x="11" y="5" width="1" height="3"/><rect x="13" y="5" width="1" height="3"/><rect x="4" y="10" width="1" height="1"/><rect x="6" y="10" width="1" height="1"/><rect x="8" y="10" width="1" height="1"/><rect x="10" y="10" width="1" height="1"/></g></svg>
<div class="s" style="left:24px;top:111px;">.rdata:0...</div>
<div class="s" style="left:81px;top:111px;">0000000A</div>
<div class="s" style="left:154px;top:111px;">C</div>
<div class="s" style="left:191px;top:111px;">_snprintf</div>
<svg style="left:5px;top:127px" width="16" height="16" viewBox="0 0 16 16"><g fill="#00a000" shape-rendering="crispEdges"><rect x="1" y="5" width="1" height="3"/><rect x="3" y="5" width="1" height="3"/><rect x="11" y="5" width="1" height="3"/><rect x="13" y="5" width="1" height="3"/><rect x="4" y="10" width="1" height="1"/><rect x="6" y="10" width="1" height="1"/><rect x="8" y="10" width="1" height="1"/><rect x="10" y="10" width="1" height="1"/></g></svg>
<div class="s" style="left:24px;top:128px;">.rdata:0...</div>
<div class="s" style="left:81px;top:128px;">00000005</div>
<div class="s" style="left:154px;top:128px;">C</div>
<div class="s" style="left:191px;top:128px;">free</div>
<svg style="left:5px;top:144px" width="16" height="16" viewBox="0 0 16 16"><g fill="#00a000" shape-rendering="crispEdges"><rect x="1" y="5" width="1" height="3"/><rect x="3" y="5" width="1" height="3"/><rect x="11" y="5" width="1" height="3"/><rect x="13" y="5" width="1" height="3"/><rect x="4" y="10" width="1" height="1"/><rect x="6" y="10" width="1" height="1"/><rect x="8" y="10" width="1" height="1"/><rect x="10" y="10" width="1" height="1"/></g></svg>
<div class="s" style="left:24px;top:145px;">.rdata:0...</div>
<div class="s" style="left:81px;top:145px;">00000007</div>
<div class="s" style="left:154px;top:145px;">C</div>
<div class="s" style="left:191px;top:145px;">malloc</div>
<svg style="left:5px;top:161px" width="16" height="16" viewBox="0 0 16 16"><g fill="#00a000" shape-rendering="crispEdges"><rect x="1" y="5" width="1" height="3"/><rect x="3" y="5" width="1" height="3"/><rect x="11" y="5" width="1" height="3"/><rect x="13" y="5" width="1" height="3"/><rect x="4" y="10" width="1" height="1"/><rect x="6" y="10" width="1" height="1"/><rect x="8" y="10" width="1" height="1"/><rect x="10" y="10" width="1" height="1"/></g></svg>
<div class="s" style="left:24px;top:162px;">.rdata:0...</div>
<div class="s" style="left:81px;top:162px;">00000005</div>
<div class="s" style="left:154px;top:162px;">C</div>
<div class="s" style="left:191px;top:162px;">atoi</div>
<svg style="left:5px;top:178px" width="16" height="16" viewBox="0 0 16 16"><g fill="#00a000" shape-rendering="crispEdges"><rect x="1" y="5" width="1" height="3"/><rect x="3" y="5" width="1" height="3"/><rect x="11" y="5" width="1" height="3"/><rect x="13" y="5" width="1" height="3"/><rect x="4" y="10" width="1" height="1"/><rect x="6" y="10" width="1" height="1"/><rect x="8" y="10" width="1" height="1"/><rect x="10" y="10" width="1" height="1"/></g></svg>
<div class="s" style="left:24px;top:179px;">.rdata:0...</div>
<div class="s" style="left:81px;top:179px;">00000007</div>
<div class="s" style="left:154px;top:179px;">C</div>
<div class="s" style="left:191px;top:179px;">getenv</div>
<svg style="left:5px;top:195px" width="16" height="16" viewBox="0 0 16 16"><g fill="#00a000" shape-rendering="crispEdges"><rect x="1" y="5" width="1" height="3"/><rect x="3" y="5" width="1" height="3"/><rect x="11" y="5" width="1" height="3"/><rect x="13" y="5" width="1" height="3"/><rect x="4" y="10" width="1" height="1"/><rect x="6" y="10" width="1" height="1"/><rect x="8" y="10" width="1" height="1"/><rect x="10" y="10" width="1" height="1"/></g></svg>
<div class="s" style="left:24px;top:196px;">.rdata:0...</div>
<div class="s" style="left:81px;top:196px;">00000007</div>
<div class="s" style="left:154px;top:196px;">C</div>
<div class="s" style="left:191px;top:196px;">setbuf</div>
<svg style="left:5px;top:212px" width="16" height="16" viewBox="0 0 16 16"><g fill="#00a000" shape-rendering="crispEdges"><rect x="1" y="5" width="1" height="3"/><rect x="3" y="5" width="1" height="3"/><rect x="11" y="5" width="1" height="3"/><rect x="13" y="5" width="1" height="3"/><rect x="4" y="10" width="1" height="1"/><rect x="6" y="10" width="1" height="1"/><rect x="8" y="10" width="1" height="1"/><rect x="10" y="10" width="1" height="1"/></g></svg>
<div class="s" style="left:24px;top:213px;">.rdata:0...</div>
<div class="s" style="left:81px;top:213px;">00000007</div>
<div class="s" style="left:154px;top:213px;">C</div>
<div class="s" style="left:191px;top:213px;">memcpy</div>
<svg style="left:5px;top:229px" width="16" height="16" viewBox="0 0 16 16"><g fill="#00a000" shape-rendering="crispEdges"><rect x="1" y="5" width="1" height="3"/><rect x="3" y="5" width="1" height="3"/><rect x="11" y="5" width="1" height="3"/><rect x="13" y="5" width="1" height="3"/><rect x="4" y="10" width="1" height="1"/><rect x="6" y="10" width="1" height="1"/><rect x="8" y="10" width="1" height="1"/><rect x="10" y="10" width="1" height="1"/></g></svg>
<div class="s" style="left:24px;top:230px;">.rdata:0...</div>
<div class="s" style="left:81px;top:230px;">00000007</div>
<div class="s" style="left:154px;top:230px;">C</div>
<div class="s" style="left:191px;top:230px;">memset</div>
<svg style="left:5px;top:246px" width="16" height="16" viewBox="0 0 16 16"><g fill="#00a000" shape-rendering="crispEdges"><rect x="1" y="5" width="1" height="3"/><rect x="3" y="5" width="1" height="3"/><rect x="11" y="5" width="1" height="3"/><rect x="13" y="5" width="1" height="3"/><rect x="4" y="10" width="1" height="1"/><rect x="6" y="10" width="1" height="1"/><rect x="8" y="10" width="1" height="1"/><rect x="10" y="10" width="1" height="1"/></g></svg>
<div class="s" style="left:24px;top:247px;">.rdata:0...</div>
<div class="s" style="left:81px;top:247px;">00000006</div>
<div class="s" style="left:154px;top:247px;">C</div>
<div class="s" style="left:191px;top:247px;">qsort</div>
<svg style="left:5px;top:263px" width="16" height="16" viewBox="0 0 16 16"><g fill="#00a000" shape-rendering="crispEdges"><rect x="1" y="5" width="1" height="3"/><rect x="3" y="5" width="1" height="3"/><rect x="11" y="5" width="1" height="3"/><rect x="13" y="5" width="1" height="3"/><rect x="4" y="10" width="1" height="1"/><rect x="6" y="10" width="1" height="1"/><rect x="8" y="10" width="1" height="1"/><rect x="10" y="10" width="1" height="1"/></g></svg>
<div class="s" style="left:24px;top:264px;">.rdata:0...</div>
<div class="s" style="left:81px;top:264px;">00000008</div>
<div class="s" style="left:154px;top:264px;">C</div>
<div class="s" style="left:191px;top:264px;">bsearch</div>
<svg style="left:5px;top:280px" width="16" height="16" viewBox="0 0 16 16"><g fill="#00a000" shape-rendering="crispEdges"><rect x="1" y="5" width="1" height="3"/><rect x="3" y="5" width="1" height="3"/><rect x="11" y="5" width="1" height="3"/><rect x="13" y="5" width="1" height="3"/><rect x="4" y="10" width="1" height="1"/><rect x="6" y="10" width="1" height="1"/><rect x="8" y="10" width="1" height="1"/><rect x="10" y="10" width="1" height="1"/></g></svg>
<div class="s" style="left:24px;top:281px;">.rdata:0...</div>
<div class="s" style="left:81px;top:281px;">00000008</div>
<div class="s" style="left:154px;top:281px;">C</div>
<div class="s" style="left:191px;top:281px;">realloc</div>
<svg style="left:5px;top:297px" width="16" height="16" viewBox="0 0 16 16"><g fill="#00a000" shape-rendering="crispEdges"><rect x="1" y="5" width="1" height="3"/><rect x="3" y="5" width="1" height="3"/><rect x="11" y="5" width="1" height="3"/><rect x="13" y="5" width="1" height="3"/><rect x="4" y="10" width="1" height="1"/><rect x="6" y="10" width="1" height="1"/><rect x="8" y="10" width="1" height="1"/><rect x="10" y="10" width="1" height="1"/></g></svg>
<div class="s" style="left:24px;top:298px;">.rdata:0...</div>
<div class="s" style="left:81px;top:298px;">0000000C</div>
<div class="s" style="left:154px;top:298px;">C</div>
<div class="s" style="left:191px;top:298px;">MSVCR90.dll</div>
<svg style="left:5px;top:314px" width="16" height="16" viewBox="0 0 16 16"><g fill="#00a000" shape-rendering="crispEdges"><rect x="1" y="5" width="1" height="3"/><rect x="3" y="5" width="1" height="3"/><rect x="11" y="5" width="1" height="3"/><rect x="13" y="5" width="1" height="3"/><rect x="4" y="10" width="1" height="1"/><rect x="6" y="10" width="1" height="1"/><rect x="8" y="10" width="1" height="1"/><rect x="10" y="10" width="1" height="1"/></g></svg>
<div class="s" style="left:24px;top:315px;">.rdata:0...</div>
<div class="s" style="left:81px;top:315px;">0000000B</div>
<div class="s" style="left:154px;top:315px;">C</div>
<div class="s" style="left:191px;top:315px;">_amsg_exit</div>
<svg style="left:5px;top:331px" width="16" height="16" viewBox="0 0 16 16"><g fill="#00a000" shape-rendering="crispEdges"><rect x="1" y="5" width="1" height="3"/><rect x="3" y="5" width="1" height="3"/><rect x="11" y="5" width="1" height="3"/><rect x="13" y="5" width="1" height="3"/><rect x="4" y="10" width="1" height="1"/><rect x="6" y="10" width="1" height="1"/><rect x="8" y="10" width="1" height="1"/><rect x="10" y="10" width="1" height="1"/></g></svg>
<div class="s" style="left:24px;top:332px;">.rdata:0...</div>
<div class="s" style="left:81px;top:332px;">0000000E</div>
<div class="s" style="left:154px;top:332px;">C</div>
<div class="s" style="left:191px;top:332px;">__getmainargs</div>
<svg style="left:5px;top:348px" width="16" height="16" viewBox="0 0 16 16"><g fill="#00a000" shape-rendering="crispEdges"><rect x="1" y="5" width="1" height="3"/><rect x="3" y="5" width="1" height="3"/><rect x="11" y="5" width="1" height="3"/><rect x="13" y="5" width="1" height="3"/><rect x="4" y="10" width="1" height="1"/><rect x="6" y="10" width="1" height="1"/><rect x="8" y="10" width="1" height="1"/><rect x="10" y="10" width="1" height="1"/></g></svg>
<div class="s" style="left:24px;top:349px;">.rdata:0...</div>
<div class="s" style="left:81px;top:349px;">00000007</div>
<div class="s" style="left:154px;top:349px;">C</div>
<div class="s" style="left:191px;top:349px;">_cexit</div>
<svg style="left:5px;top:365px" width="16" height="16" viewBox="0 0 16 16"><g fill="#00a000" shape-rendering="crispEdges"><rect x="1" y="5" width="1" height="3"/><rect x="3" y="5" width="1" height="3"/><rect x="11" y="5" width="1" height="3"/><rect x="13" y="5" width="1" height="3"/><rect x="4" y="10" width="1" height="1"/><rect x="6" y="10" width="1" height="1"/><rect x="8" y="10" width="1" height="1"/><rect x="10" y="10" width="1" height="1"/></g></svg>
<div class="s" style="left:24px;top:366px;">.rdata:0...</div>
<div class="s" style="left:81px;top:366px;">00000006</div>
<div class="s" style="left:154px;top:366px;">C</div>
<div class="s" style="left:191px;top:366px;">_exit</div>
<svg style="left:5px;top:382px" width="16" height="16" viewBox="0 0 16 16"><g fill="#00a000" shape-rendering="crispEdges"><rect x="1" y="5" width="1" height="3"/><rect x="3" y="5" width="1" height="3"/><rect x="11" y="5" width="1" height="3"/><rect x="13" y="5" width="1" height="3"/><rect x="4" y="10" width="1" height="1"/><rect x="6" y="10" width="1" height="1"/><rect x="8" y="10" width="1" height="1"/><rect x="10" y="10" width="1" height="1"/></g></svg>
<div class="s" style="left:24px;top:383px;">.rdata:0...</div>
<div class="s" style="left:81px;top:383px;">0000000C</div>
<div class="s" style="left:154px;top:383px;">C</div>
<div class="s" style="left:191px;top:383px;">_XcptFilter</div>
<svg style="left:5px;top:399px" width="16" height="16" viewBox="0 0 16 16"><g fill="#00a000" shape-rendering="crispEdges"><rect x="1" y="5" width="1" height="3"/><rect x="3" y="5" width="1" height="3"/><rect x="11" y="5" width="1" height="3"/><rect x="13" y="5" width="1" height="3"/><rect x="4" y="10" width="1" height="1"/><rect x="6" y="10" width="1" height="1"/><rect x="8" y="10" width="1" height="1"/><rect x="10" y="10" width="1" height="1"/></g></svg>
<div class="s" style="left:24px;top:400px;">.rdata:0...</div>
<div class="s" style="left:81px;top:400px;">00000005</div>
<div class="s" style="left:154px;top:400px;">C</div>
<div class="s" style="left:191px;top:400px;">exit</div>
<svg style="left:5px;top:416px" width="16" height="16" viewBox="0 0 16 16"><g fill="#00a000" shape-rendering="crispEdges"><rect x="1" y="5" width="1" height="3"/><rect x="3" y="5" width="1" height="3"/><rect x="11" y="5" width="1" height="3"/><rect x="13" y="5" width="1" height="3"/><rect x="4" y="10" width="1" height="1"/><rect x="6" y="10" width="1" height="1"/><rect x="8" y="10" width="1" height="1"/><rect x="10" y="10" width="1" height="1"/></g></svg>
<div class="s" style="left:24px;top:417px;">.rdata:0...</div>
<div class="s" style="left:81px;top:417px;">0000000A</div>
<div class="s" style="left:154px;top:417px;">C</div>
<div class="s" style="left:191px;top:417px;">__initenv</div>
<svg style="left:5px;top:433px" width="16" height="16" viewBox="0 0 16 16"><g fill="#00a000" shape-rendering="crispEdges"><rect x="1" y="5" width="1" height="3"/><rect x="3" y="5" width="1" height="3"/><rect x="11" y="5" width="1" height="3"/><rect x="13" y="5" width="1" height="3"/><rect x="4" y="10" width="1" height="1"/><rect x="6" y="10" width="1" height="1"/><rect x="8" y="10" width="1" height="1"/><rect x="10" y="10" width="1" height="1"/></g></svg>
<div class="s" style="left:24px;top:434px;">.rdata:0...</div>
<div class="s" style="left:81px;top:434px;">0000000A</div>
<div class="s" style="left:154px;top:434px;">C</div>
<div class="s" style="left:191px;top:434px;">_initterm</div>
<div style="left:262px;top:0;width:17px;height:443px;background:#f0f0f0;"></div>
<svg style="left:266px;top:8px" width="7" height="4" viewBox="0 0 7 4"><path d="M0 4h7l-3.500-4z" fill="#505050"/></svg>
<svg style="left:266px;top:434px" width="7" height="4" viewBox="0 0 7 4"><path d="M0 0h7l-3.500 4z" fill="#505050"/></svg>
<div style="left:262px;top:19px;width:16px;height:48px;border:1px solid #979797;border-radius:2px;background:linear-gradient(90deg,#f5f5f5,#e6e6e6 50%,#d4d4d4);box-shadow:inset 0 0 0 1px rgba(255,255,255,.7);"></div>
<div style="left:266px;top:40px;width:7px;height:1px;background:#6a6a6a;"></div>
<div style="left:266px;top:42px;width:7px;height:1px;background:#6a6a6a;"></div>
<div style="left:266px;top:44px;width:7px;height:1px;background:#6a6a6a;"></div>
<div style="left:0;top:443px;width:279px;height:17px;background:#f0f0f0;"></div>
<svg style="left:7px;top:448px" width="4" height="7" viewBox="0 0 4 7"><path d="M4 0v7l-4-3.500z" fill="#505050"/></svg>
<svg style="left:250px;top:448px" width="4" height="7" viewBox="0 0 4 7"><path d="M0 0v7l4-3.500z" fill="#505050"/></svg>
<div style="left:19px;top:444px;width:102px;height:15px;border:1px solid #979797;border-radius:2px;background:linear-gradient(#f5f5f5,#e6e6e6 50%,#d4d4d4);box-shadow:inset 0 0 0 1px rgba(255,255,255,.7);"></div>
<div style="left:67px;top:448px;width:1px;height:7px;background:#6a6a6a;"></div>
<div style="left:69px;top:448px;width:1px;height:7px;background:#6a6a6a;"></div>
<div style="left:71px;top:448px;width:1px;height:7px;background:#6a6a6a;"></div>
</div>
<svg style="left:1001px;top:731px;" width="8" height="8" viewBox="0 0 8 8"><g fill="#b8b8b8"><rect x="6" y="0" width="2" height="2"/><rect x="3" y="3" width="2" height="2"/><rect x="6" y="3" width="2" height="2"/><rect x="0" y="6" width="2" height="2"/><rect x="3" y="6" width="2" height="2"/><rect x="6" y="6" width="2" height="2"/></g></svg>
<div style="left:18px;top:749px;width:1020px;height:6px;background:#f0f0f0;"></div>
<div style="left:18px;top:754px;width:1020px;height:123px;background:#fff;border:1px solid #828790;"></div>
<div style="left:20px;top:855px;width:999px;height:11px;background:#3399ff;"></div>
<div class="o" style="left:22px;top:756px;color:#000;">Compiling file 'C:\Program Files (x86)\IDA Free\idc\onload.idc'...</div>
<div class="o" style="left:22px;top:767px;color:#000;">Executing function 'OnLoad'...</div>
<div class="o" style="left:22px;top:778px;color:#000;">IDA is analysing the input file...</div>
<div class="o" style="left:22px;top:789px;color:#000;">You may start to explore the input file right now.</div>
<div class="o" style="left:22px;top:800px;color:#000;">Can not set debug privilege!</div>
<div class="o" style="left:22px;top:811px;color:#000;">Using FLIRT signature: Microsoft VisualC 2-8/net runtime</div>
<div class="o" style="left:22px;top:822px;color:#000;">Propagating type information...</div>
<div class="o" style="left:22px;top:833px;color:#000;">Function argument information is propagated</div>
<div class="o" style="left:22px;top:844px;color:#000;">The initial autoanalysis has been finished.</div>
<div class="o" style="left:22px;top:855px;color:#fff;">401090: force zero offsets in structures</div>
<div style="left:1020px;top:755px;width:17px;height:121px;background:#f0f0f0;"></div>
<svg style="left:1024px;top:763px;" width="7" height="4" viewBox="0 0 7 4"><path d="M0 4h7l-3.500-4z" fill="#505050"/></svg>
<svg style="left:1024px;top:864px;" width="7" height="4" viewBox="0 0 7 4"><path d="M0 0h7l-3.500 4z" fill="#505050"/></svg>
<div style="left:1020px;top:838px;width:15px;height:19px;border:1px solid #979797;border-radius:2px;background:linear-gradient(90deg,#f5f5f5,#e6e6e6 50%,#d4d4d4);box-shadow:inset 0 0 0 1px rgba(255,255,255,.7);"></div>
<div style="left:1024px;top:843px;width:7px;height:1px;background:#6a6a6a;"></div>
<div style="left:1024px;top:845px;width:7px;height:1px;background:#6a6a6a;"></div>
<div style="left:1024px;top:847px;width:7px;height:1px;background:#6a6a6a;"></div>
<div style="left:1024px;top:849px;width:7px;height:1px;background:#6a6a6a;"></div>
<div style="left:18px;top:877px;width:1020px;height:19px;background:#f0f0f0;"></div>
<div class="t" style="left:20px;top:881px;font-size:12px;font-weight:bold;word-spacing:1.500px;transform:scaleX(0.92);transform-origin:0 0;">AU: idle</div>
<div class="t" style="left:106px;top:881px;font-size:12px;font-weight:bold;word-spacing:1.500px;transform:scaleX(0.96);transform-origin:0 0;">Down</div>
<div class="t" style="left:147px;top:881px;font-size:12px;font-weight:bold;word-spacing:1.500px;transform:scaleX(0.85);transform-origin:0 0;">Disk: 44GB</div>
<div style="left:101px;top:880px;width:1px;height:15px;background:#dadada;"></div>
<div style="left:102px;top:880px;width:1px;height:15px;background:#fbfbfb;"></div>
<div style="left:141px;top:880px;width:1px;height:15px;background:#dadada;"></div>
<div style="left:142px;top:880px;width:1px;height:15px;background:#fbfbfb;"></div>
<div style="left:211px;top:880px;width:1px;height:15px;background:#dadada;"></div>
<div style="left:212px;top:880px;width:1px;height:15px;background:#fbfbfb;"></div>
<svg style="left:1028px;top:886px;" width="8" height="8" viewBox="0 0 8 8"><g fill="#b8b8b8"><rect x="6" y="0" width="2" height="2"/><rect x="3" y="3" width="2" height="2"/><rect x="6" y="3" width="2" height="2"/><rect x="0" y="6" width="2" height="2"/><rect x="3" y="6" width="2" height="2"/><rect x="6" y="6" width="2" height="2"/></g></svg>
</body></html>
